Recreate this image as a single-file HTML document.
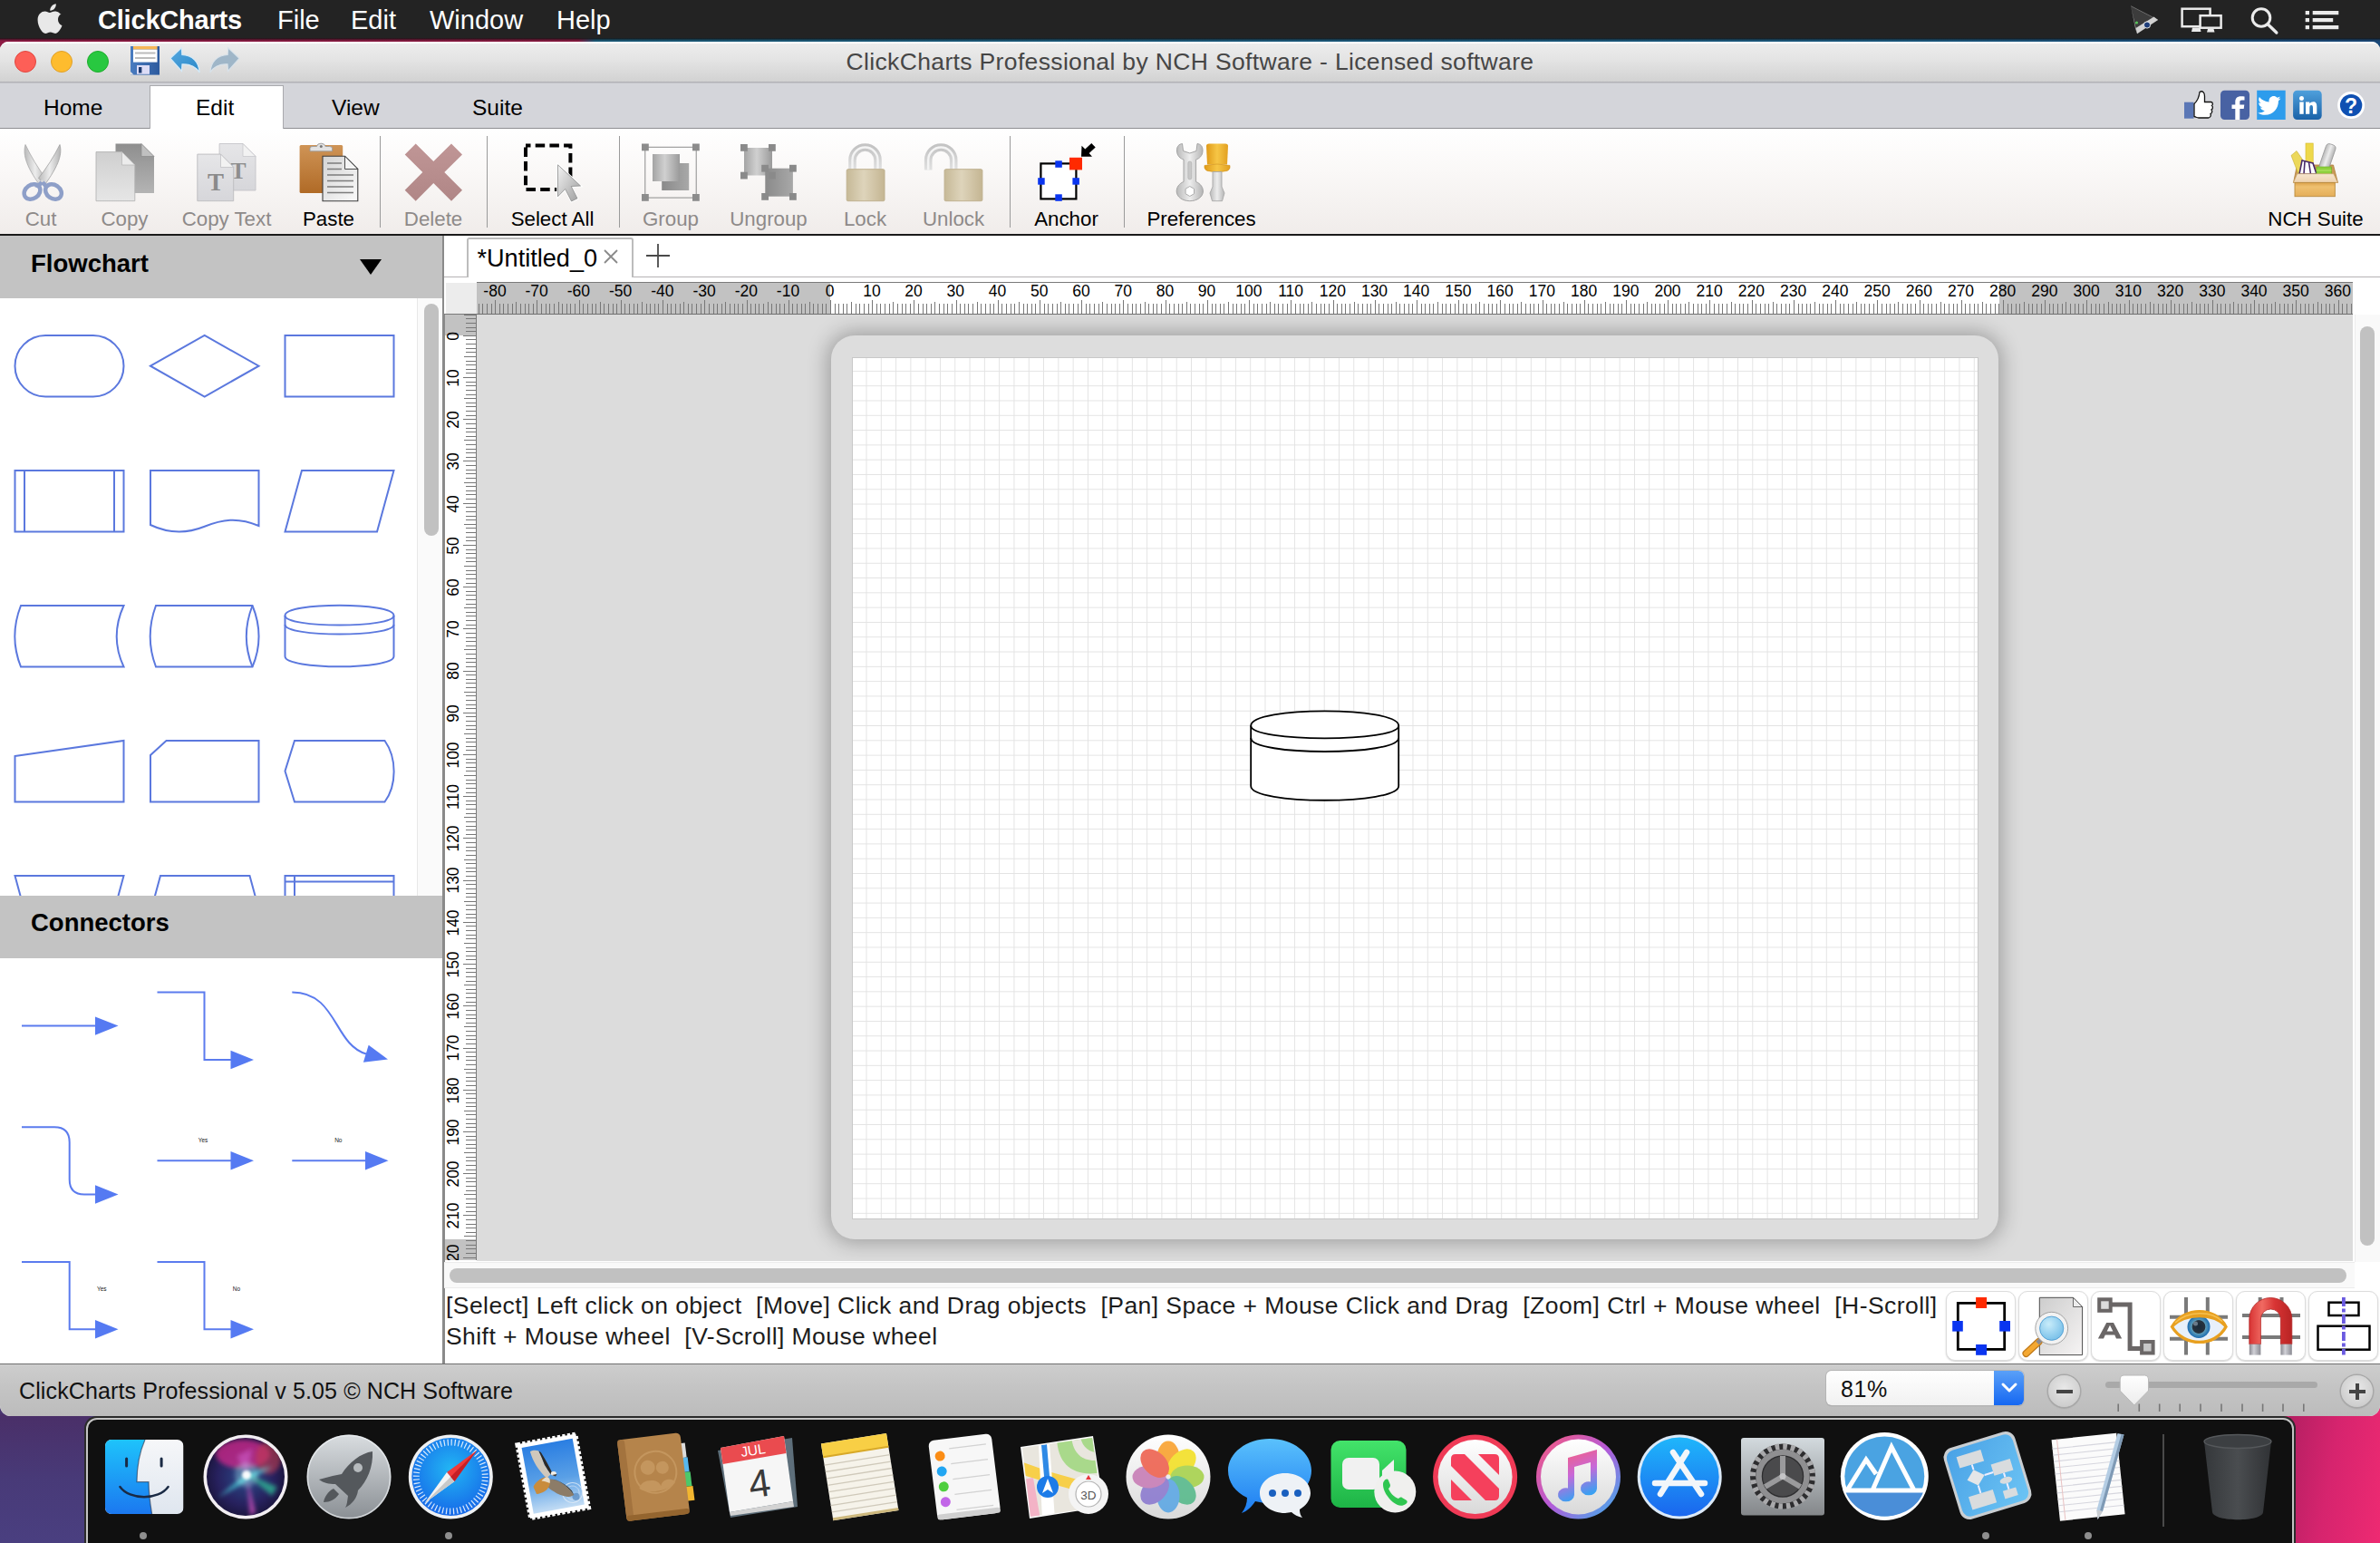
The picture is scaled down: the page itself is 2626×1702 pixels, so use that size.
<!DOCTYPE html>
<html lang="en"><head><meta charset="utf-8"><title>ClickCharts Professional by NCH Software - Licensed software</title>
<style>
*{box-sizing:border-box;margin:0;padding:0}
html,body{width:2626px;height:1702px;overflow:hidden}
body{position:relative;font-family:"Liberation Sans",sans-serif;background:#4a3a78;color:#000}
.abs{position:absolute}
.t{position:absolute;white-space:nowrap;line-height:1}
svg{position:absolute;overflow:visible}
#wall{left:0;top:0;width:2626px;height:1702px;background:linear-gradient(90deg,#48356f 0%,#4a3d7e 8%,#6a2f74 50%,#c4246c 92%,#ea2a72 100%)}
#wallL{left:0;top:1560px;width:100px;height:142px;background:linear-gradient(180deg,#4a2f68,#483a78 50%,#4a3f80)}
#wallR{left:2526px;top:1560px;width:100px;height:142px;background:linear-gradient(100deg,#b41f62 0%,#d6246e 45%,#ee2a72 100%)}
#menubar{left:0;top:0;width:2626px;height:43px;background:#232323}
#topline{left:0;top:42px;width:2626px;height:20px;background:linear-gradient(90deg,#8e1a44 0%,#86193f 24.300%,#1a5a78 25%,#1c5a80 80%,#1a4878 100%)}
.mb{color:#fff;font-size:29px;top:8px}
#win{left:0;top:46px;width:2626px;height:1516px;background:#fff;border-radius:9px 9px 12px 12px;overflow:hidden}
#titlebar{left:0;top:0;width:2626px;height:45px;background:linear-gradient(180deg,#fff 0,#fff 1.500px,#ececec 2px,#e4e4e4 45%,#d2d2d2 100%);border-bottom:1.500px solid #b2b2b6}
#title{left:0;width:2626px;text-align:center;top:9px;font-size:26.5px;color:#464646;letter-spacing:.35px}
.tl{width:24px;height:24px;border-radius:50%;top:10px}
#tabrow{left:0;top:45px;width:2626px;height:51px;background:#d4d5da;border-top:1px solid #c2c3c8;border-bottom:1px solid #8e8e92}
.tab{font-size:24.5px;top:61px;color:#000}
#tabEdit{left:165px;top:48px;width:148px;height:49px;background:#fff;border:1px solid #a9a9ad;border-bottom:none}
#ribbon{left:0;top:96px;width:2626px;height:117px;background:linear-gradient(180deg,#ffffff 0%,#faf8f7 40%,#f0ecea 100%)}
#ribline{left:0;top:212.300px;width:2626px;height:1.700px;background:#1a1a1a}
.rl{font-size:22.3px;top:185px;color:#000;transform:translateX(-50%)}
.rl.dis{color:#8e8a89}
.sep{width:1px;top:104px;height:101px;background:#9a9a9a}
</style></head><body>
<div id="wall" class="abs"></div><div id="wallL" class="abs"></div><div id="wallR" class="abs"></div>
<div id="menubar" class="abs"></div>
<div id="topline" class="abs"></div><div class="abs" style="left:0;top:42px;width:2626px;height:3px;background:linear-gradient(180deg,rgba(20,20,20,.95),rgba(20,20,20,0))"></div>
<svg id="apple" style="left:41px;top:4px" width="28" height="33" viewBox="0 0 814 1000"><path fill="#e8e8e8" d="M788 341c-6 5-108 62-108 190 0 148 130 200 134 201-1 3-21 71-69 141-43 62-88 124-156 124s-86-40-164-40c-76 0-103 41-166 41s-106-57-156-127C46 790 0 666 0 548c0-189 123-290 244-290 64 0 118 42 158 42 38 0 98-45 171-45 28 0 127 3 193 97zM561 164c30-36 52-86 52-136 0-7-1-14-2-20-49 2-108 33-143 74-28 32-54 82-54 132 0 8 1 15 2 18 3 1 8 1 13 1 44 0 100-30 132-69z"/></svg>
<div class="t mb" style="left:108px;font-weight:bold;letter-spacing:-.2px">ClickCharts</div>
<div class="t mb" style="left:306px">File</div>
<div class="t mb" style="left:387px">Edit</div>
<div class="t mb" style="left:474px">Window</div>
<div class="t mb" style="left:614px">Help</div>
<svg id="mbicons" style="left:2336px;top:0" width="290" height="45" viewBox="2336 0 290 45">
<path d="M2351.200 6.700L2381 22L2358 37.200Z" fill="#3c3c3c"/>
<path d="M2351.200 6.700L2381 22" stroke="#6a6a6a" stroke-width="1" fill="none"/>
<path d="M2381 22L2358 37.200L2356.500 31L2376.500 18.500Z" fill="#d2d2d2"/><path d="M2351.200 6.700L2358 37.200L2356 31Z" fill="#bdbdbd"/>
<circle cx="2369" cy="27.500" r="3.600" fill="#1d3d7a" stroke="#e8e8e8" stroke-width="1"/><circle cx="2357.500" cy="25" r="1.600" fill="#58c25a"/>
<rect x="2407.600" y="9.700" width="31" height="19.500" fill="none" stroke="#ebebeb" stroke-width="2.500"/><path d="M2419 30.400H2427.500L2428.500 35H2418Z" fill="#ebebeb"/>
<rect x="2427.600" y="17.200" width="23" height="13.500" fill="#232323" stroke="#ebebeb" stroke-width="2.500"/><path d="M2436 32H2442.500L2443.500 35.500H2435Z" fill="#ebebeb"/>
<circle cx="2495" cy="19.500" r="9.800" fill="none" stroke="#ebebeb" stroke-width="3"/><path d="M2502.200 26.800L2511.800 36" stroke="#ebebeb" stroke-width="3.400" stroke-linecap="round"/>
<g fill="#ebebeb"><rect x="2543.700" y="12" width="4.300" height="4.200"/><rect x="2543.700" y="20" width="4.300" height="4.200"/><rect x="2543.700" y="28" width="4.300" height="4.200"/><rect x="2551.700" y="12" width="28.600" height="4.200"/><rect x="2551.700" y="20" width="22.500" height="4.200"/><rect x="2551.700" y="28" width="28.600" height="4.200"/></g>
</svg>
<div id="win" class="abs">
<div id="titlebar" class="abs"></div>
<div class="abs tl" style="left:16px;background:#fd5f57;border:1px solid #e2463f"></div>
<div class="abs tl" style="left:56px;background:#febc2e;border:1px solid #e0a028"></div>
<div class="abs tl" style="left:96px;background:#28c840;border:1px solid #1dad2b"></div>
<div id="title" class="t">ClickCharts Professional by NCH Software - Licensed software</div>
<div id="tabrow" class="abs"></div>
<div id="tabEdit" class="abs"></div>
<div class="t tab" style="left:48px">Home</div>
<div class="t tab" style="left:216px">Edit</div>
<div class="t tab" style="left:366px">View</div>
<div class="t tab" style="left:521px">Suite</div>
<div id="ribbon" class="abs"></div>
<div id="ribline" class="abs"></div>
<div class="t rl dis" style="left:45px">Cut</div>
<div class="t rl dis" style="left:137.5px">Copy</div>
<div class="t rl dis" style="left:250px">Copy Text</div>
<div class="t rl" style="left:362.5px">Paste</div>
<div class="abs sep" style="left:419px"></div>
<div class="t rl dis" style="left:478px">Delete</div>
<div class="abs sep" style="left:537px"></div>
<div class="t rl" style="left:609.5px">Select All</div>
<div class="abs sep" style="left:683px"></div>
<div class="t rl dis" style="left:740px">Group</div>
<div class="t rl dis" style="left:848px">Ungroup</div>
<div class="t rl dis" style="left:954.5px">Lock</div>
<div class="t rl dis" style="left:1052px">Unlock</div>
<div class="abs sep" style="left:1114px"></div>
<div class="t rl" style="left:1176.5px">Anchor</div>
<div class="abs sep" style="left:1240px"></div>
<div class="t rl" style="left:1325.5px">Preferences</div>
<div class="t rl" style="left:2555px">NCH Suite</div>
<style>
#left{left:0;top:214px;width:489px;height:1244px;background:#fff}
#lborder{left:488px;top:214px;width:2px;height:1244px;background:#8a8a8a}
.lh{left:0;width:488px;height:69px;background:#c3c3c3}
.lht{font-size:27.5px;font-weight:bold;left:34px;color:#000}
#lscroll{left:460px;top:283px;width:28px;height:659px;background:#fafafa;border-left:1px solid #e8e8e8}
#lthumb{left:468px;top:289px;width:16px;height:256px;border-radius:8px;background:#c1c1c1}
.shp{fill:none;stroke:#5b78de;stroke-width:2}
.con{fill:none;stroke:#5b7bee;stroke-width:2}
.ah{fill:#557af2;stroke:none}
.ct{font-size:6.5px;fill:#222;font-family:"Liberation Sans",sans-serif}
</style>
<div id="left" class="abs"></div>
<div class="abs lh" style="top:214px"></div>
<div class="t lht" style="top:231px">Flowchart</div>
<svg style="left:397px;top:240px" width="24" height="17"><path d="M0 0H24L12 17Z" fill="#000"/></svg>
<div id="lscroll" class="abs"></div>
<div id="lthumb" class="abs"></div>
<svg id="shapes" style="left:0;top:283px" width="460" height="659" viewBox="0 283 460 659">
<!-- row 1 : y 324-391 -->
<rect class="shp" x="16.5" y="324" width="120" height="67.5" rx="33.7"/>
<path class="shp" d="M166 357.7L225.7 324L285.5 357.7L225.7 391.5Z"/>
<rect class="shp" x="314.5" y="324" width="120" height="67.5"/>
<!-- row 2 : y 473-540 -->
<rect class="shp" x="16.5" y="473" width="120" height="67.5"/>
<path class="shp" d="M27 473V540.5M126 473V540.5"/>
<path class="shp" d="M166 473H285.5V534C262 524 245 527 225 535C205 543 185 542 166 533Z"/>
<path class="shp" d="M333 473H434.5L416 540.5H314.5Z"/>
<!-- row 3 : y 622-689 -->
<path class="shp" d="M23 622H136.5C126 645 126 667 136.5 689.5H23C14 667 14 645 23 622Z"/>
<path class="shp" d="M172 622H278.5C288 645 288 667 278.5 689.5H172C163.500 667 163.500 645 172 622Z"/>
<path class="shp" d="M278.5 622C269.500 645 269.500 667 278.500 689.5"/>
<path class="shp" d="M314.5 633C314.5 618 434.5 618 434.5 633V678C434.5 693 314.5 693 314.5 678Z"/>
<path class="shp" d="M314.5 633C314.5 647 434.5 647 434.5 633M314.5 643C314.5 657 434.5 657 434.5 643"/>
<!-- row 4 : y 771-838 -->
<path class="shp" d="M16.5 788L136.5 771V838.5H16.500Z"/>
<path class="shp" d="M183.5 771H285.500V838.500H166V787Z"/>
<path class="shp" d="M325 771H424.500C438 790 438 820 424.500 838.500H325L314.500 804.500Z"/>
<!-- row 5 : y 920- -->
<path class="shp" d="M16.5 920H136.5L118 988H35Z"/>
<path class="shp" d="M177 920H275.500L294 988H158.500Z"/>
<rect class="shp" x="314.5" y="920" width="120" height="67.500"/>
<path class="shp" d="M325 920V988M314.500 926.500H434.500"/>
</svg>
<div class="abs lh" style="top:942px"></div>
<div class="t lht" style="top:958px">Connectors</div>
<svg id="conns" style="left:0;top:1011px" width="488" height="447" viewBox="0 1011 488 447">
<!-- coordinates are win-relative (abs-46) -->
<path class="con" d="M24 1085.500H108"/><path class="ah" d="M105 1075.500L130.500 1085.500L105 1095.700Z"/>
<path class="con" d="M173.500 1048.500H225.500V1123H258"/><path class="ah" d="M254.500 1112.800L280 1123L254.500 1133.200Z"/>
<path class="con" d="M322.300 1048.500C372 1048.500 368 1106 404 1116.500"/><path class="ah" d="M406.700 1106.700L428 1122.500L400.900 1125.700Z"/>
<path class="con" d="M24 1197.200H60Q76.700 1197.200 76.700 1214V1255Q76.700 1271.500 93 1271.500H108"/><path class="ah" d="M105 1261.300L130.500 1271.500L105 1281.700Z"/>
<path class="con" d="M173.500 1234.200H258"/><path class="ah" d="M254.500 1224L280 1234.200L254.500 1244.400Z"/>
<text class="ct" x="224" y="1213.700" text-anchor="middle">Yes</text>
<path class="con" d="M322.300 1234.200H406"/><path class="ah" d="M403 1224L428.500 1234.200L403 1244.400Z"/>
<text class="ct" x="373.300" y="1213.700" text-anchor="middle">No</text>
<path class="con" d="M24 1346H76.700V1420.300H108"/><path class="ah" d="M105 1410.100L130.500 1420.300L105 1430.500Z"/>
<text class="ct" x="112.300" y="1378" text-anchor="middle">Yes</text>
<path class="con" d="M173.500 1346H225.500V1420.300H258"/><path class="ah" d="M254.500 1410.100L280 1420.300L254.500 1430.500Z"/>
<text class="ct" x="261" y="1378" text-anchor="middle">No</text>
</svg>
<div id="lborder" class="abs"></div>
<style>
#doctabs{left:490px;top:214px;width:2136px;height:47px;background:#fff;border-bottom:2px solid #b6b2b4}
#doctab{left:515px;top:216px;width:184px;height:45px;background:#fff;border:2px solid #bcbcbc;border-bottom:none;border-radius:3px 3px 0 0}
#canvas{left:490px;top:260px;width:2136px;height:1086px;background:#fff}
#cbg{left:526px;top:301px;width:2070px;height:1044px;background:#dcdcdc}
#hr{left:526px;top:265px;width:2070px;height:35.500px;background:#c2c2c2;overflow:hidden;border-top:1px solid #7a7a7a;border-bottom:1px solid #707070}
#hrw{left:390px;top:0;width:1290px;height:35px;background:#fff}
#hticks{left:0;top:0;width:2070px;height:35px}
#vr{left:491px;top:301px;width:35px;height:1043px;background:#fff;overflow:hidden;border-right:1px solid #7a7a7a}
.rlab{font-size:17.5px;color:#000;position:absolute;line-height:1;white-space:nowrap}
.vlab{font-size:17.5px;color:#000;position:absolute;line-height:1;white-space:nowrap;transform-origin:0 0;transform:rotate(-90deg)}
#page{left:917px;top:324px;width:1288px;height:997px;background:#dddddd;border-radius:26px;box-shadow:0 0 22px 4px rgba(0,0,0,.28)}
#sheet{left:940px;top:348px;width:1243px;height:951px;background-color:#fff;border:1px solid #c8c8c8;
background-image:linear-gradient(90deg,#e3e3e3 1px,transparent 1px),linear-gradient(180deg,#e3e3e3 1px,transparent 1px);background-size:16.3px 16.3px;background-position:-1.800px -2.400px}
#vsb{left:2598px;top:301px;width:28px;height:1045px;background:#f9f9f9;border-left:1px solid #ececec}
#vth{left:2604px;top:314px;width:16px;height:1014px;border-radius:8px;background:#c1c1c1}
#hsb{left:490px;top:1346px;width:2108px;height:29px;background:#f9f9f9;border-top:1px solid #ececec;border-bottom:1px solid #ececec}
#hth{left:496px;top:1353px;width:2093px;height:16px;border-radius:8px;background:#c1c1c1}
#hint{left:492px;top:1378px;font-size:26.5px;letter-spacing:.44px;line-height:33.6px;color:#1c1c1c;white-space:pre;position:absolute}
</style>
<div id="doctabs" class="abs"></div><div id="doctab" class="abs"></div>
<div class="t" style="left:526.5px;top:225px;font-size:27.1px;color:#000">*Untitled_0</div>
<svg style="left:666px;top:229px" width="16" height="16"><path d="M1 1L15 15M15 1L1 15" stroke="#8a8a8a" stroke-width="1.8" fill="none"/></svg>
<svg style="left:713px;top:223px" width="26" height="26"><path d="M13 0V26M0 13H26" stroke="#4a4a4a" stroke-width="1.8" fill="none"/></svg>
<div id="canvas" class="abs"></div><div id="cbg" class="abs"></div>
<div id="page" class="abs"></div><div id="sheet" class="abs"></div>
<div id="hr" class="abs"><div id="hrw" class="abs"></div>
<svg id="hticks" width="2070" height="35"><path d="M2.2 22.7V33.5M6.8 22.7V33.5M11.4 22.7V33.5M16.1 22.7V33.5M20.7 18.9V33.5M25.3 22.7V33.5M29.9 22.7V33.5M34.5 22.7V33.5M39.2 22.7V33.5M43.8 20.8V33.5M48.4 22.7V33.5M53.0 22.7V33.5M57.7 22.7V33.5M62.3 22.7V33.5M66.9 18.9V33.5M71.5 22.7V33.5M76.1 22.7V33.5M80.8 22.7V33.5M85.4 22.7V33.5M90.0 20.8V33.5M94.6 22.7V33.5M99.2 22.7V33.5M103.9 22.7V33.5M108.5 22.7V33.5M113.1 18.9V33.5M117.7 22.7V33.5M122.4 22.7V33.5M127.0 22.7V33.5M131.6 22.7V33.5M136.2 20.8V33.5M140.8 22.7V33.5M145.5 22.7V33.5M150.1 22.7V33.5M154.7 22.7V33.5M159.3 18.9V33.5M163.9 22.7V33.5M168.6 22.7V33.5M173.2 22.7V33.5M177.8 22.7V33.5M182.4 20.8V33.5M187.1 22.7V33.5M191.7 22.7V33.5M196.3 22.7V33.5M200.9 22.7V33.5M205.5 18.9V33.5M210.2 22.7V33.5M214.8 22.7V33.5M219.4 22.7V33.5M224.0 22.7V33.5M228.6 20.8V33.5M233.3 22.7V33.5M237.9 22.7V33.5M242.5 22.7V33.5M247.1 22.7V33.5M251.8 18.9V33.5M256.4 22.7V33.5M261.0 22.7V33.5M265.6 22.7V33.5M270.2 22.7V33.5M274.9 20.8V33.5M279.5 22.7V33.5M284.1 22.7V33.5M288.7 22.7V33.5M293.3 22.7V33.5M298.0 18.9V33.5M302.6 22.7V33.5M307.2 22.7V33.5M311.8 22.7V33.5M316.5 22.7V33.5M321.1 20.8V33.5M325.7 22.7V33.5M330.3 22.7V33.5M334.9 22.7V33.5M339.6 22.7V33.5M344.2 18.9V33.5M348.8 22.7V33.5M353.4 22.7V33.5M358.0 22.7V33.5M362.7 22.7V33.5M367.3 20.8V33.5M371.9 22.7V33.5M376.5 22.7V33.5M381.2 22.7V33.5M385.8 22.7V33.5M390.4 18.9V33.5M395.0 22.7V33.5M399.6 22.7V33.5M404.3 22.7V33.5M408.9 22.7V33.5M413.5 20.8V33.5M418.1 22.7V33.5M422.8 22.7V33.5M427.4 22.7V33.5M432.0 22.7V33.5M436.6 18.9V33.5M441.2 22.7V33.5M445.9 22.7V33.5M450.5 22.7V33.5M455.1 22.7V33.5M459.7 20.8V33.5M464.3 22.7V33.5M469.0 22.7V33.5M473.6 22.7V33.5M478.2 22.7V33.5M482.8 18.9V33.5M487.5 22.7V33.5M492.1 22.7V33.5M496.7 22.7V33.5M501.3 22.7V33.5M505.9 20.8V33.5M510.6 22.7V33.5M515.2 22.7V33.5M519.8 22.7V33.5M524.4 22.7V33.5M529.0 18.9V33.5M533.7 22.7V33.5M538.3 22.7V33.5M542.9 22.7V33.5M547.5 22.7V33.5M552.2 20.8V33.5M556.8 22.7V33.5M561.4 22.7V33.5M566.0 22.7V33.5M570.6 22.7V33.5M575.3 18.9V33.5M579.9 22.7V33.5M584.5 22.7V33.5M589.1 22.7V33.5M593.7 22.7V33.5M598.4 20.8V33.5M603.0 22.7V33.5M607.6 22.7V33.5M612.2 22.7V33.5M616.9 22.7V33.5M621.5 18.9V33.5M626.1 22.7V33.5M630.7 22.7V33.5M635.3 22.7V33.5M640.0 22.7V33.5M644.6 20.8V33.5M649.2 22.7V33.5M653.8 22.7V33.5M658.4 22.7V33.5M663.1 22.7V33.5M667.7 18.9V33.5M672.3 22.7V33.5M676.9 22.7V33.5M681.6 22.7V33.5M686.2 22.7V33.5M690.8 20.8V33.5M695.4 22.7V33.5M700.0 22.7V33.5M704.7 22.7V33.5M709.3 22.7V33.5M713.9 18.9V33.5M718.5 22.7V33.5M723.1 22.7V33.5M727.8 22.7V33.5M732.4 22.7V33.5M737.0 20.8V33.5M741.6 22.7V33.5M746.3 22.7V33.5M750.9 22.7V33.5M755.5 22.7V33.5M760.1 18.9V33.5M764.7 22.7V33.5M769.4 22.7V33.5M774.0 22.7V33.5M778.6 22.7V33.5M783.2 20.8V33.5M787.8 22.7V33.5M792.5 22.7V33.5M797.1 22.7V33.5M801.7 22.7V33.5M806.3 18.9V33.5M811.0 22.7V33.5M815.6 22.7V33.5M820.2 22.7V33.5M824.8 22.7V33.5M829.4 20.8V33.5M834.1 22.7V33.5M838.7 22.7V33.5M843.3 22.7V33.5M847.9 22.7V33.5M852.5 18.9V33.5M857.2 22.7V33.5M861.8 22.7V33.5M866.4 22.7V33.5M871.0 22.7V33.5M875.7 20.8V33.5M880.3 22.7V33.5M884.9 22.7V33.5M889.5 22.7V33.5M894.1 22.7V33.5M898.8 18.9V33.5M903.4 22.7V33.5M908.0 22.7V33.5M912.6 22.7V33.5M917.3 22.7V33.5M921.9 20.8V33.5M926.5 22.7V33.5M931.1 22.7V33.5M935.7 22.7V33.5M940.4 22.7V33.5M945.0 18.9V33.5M949.6 22.7V33.5M954.2 22.7V33.5M958.8 22.7V33.5M963.5 22.7V33.5M968.1 20.8V33.5M972.7 22.7V33.5M977.3 22.7V33.5M982.0 22.7V33.5M986.6 22.7V33.5M991.2 18.9V33.5M995.8 22.7V33.5M1000.4 22.7V33.5M1005.1 22.7V33.5M1009.7 22.7V33.5M1014.3 20.8V33.5M1018.9 22.7V33.5M1023.5 22.7V33.5M1028.2 22.7V33.5M1032.8 22.7V33.5M1037.4 18.9V33.5M1042.0 22.7V33.5M1046.7 22.7V33.5M1051.3 22.7V33.5M1055.9 22.7V33.5M1060.5 20.8V33.5M1065.1 22.7V33.5M1069.8 22.7V33.5M1074.4 22.7V33.5M1079.0 22.7V33.5M1083.6 18.9V33.5M1088.2 22.7V33.5M1092.9 22.7V33.5M1097.5 22.7V33.5M1102.1 22.7V33.5M1106.7 20.8V33.5M1111.4 22.7V33.5M1116.0 22.7V33.5M1120.6 22.7V33.5M1125.2 22.7V33.5M1129.8 18.9V33.5M1134.5 22.7V33.5M1139.1 22.7V33.5M1143.7 22.7V33.5M1148.3 22.7V33.5M1152.9 20.8V33.5M1157.6 22.7V33.5M1162.2 22.7V33.5M1166.8 22.7V33.5M1171.4 22.7V33.5M1176.1 18.9V33.5M1180.7 22.7V33.5M1185.3 22.7V33.5M1189.9 22.7V33.5M1194.5 22.7V33.5M1199.2 20.8V33.5M1203.8 22.7V33.5M1208.4 22.7V33.5M1213.0 22.7V33.5M1217.6 22.7V33.5M1222.3 18.9V33.5M1226.9 22.7V33.5M1231.5 22.7V33.5M1236.1 22.7V33.5M1240.8 22.7V33.5M1245.4 20.8V33.5M1250.0 22.7V33.5M1254.6 22.7V33.5M1259.2 22.7V33.5M1263.9 22.7V33.5M1268.5 18.9V33.5M1273.1 22.7V33.5M1277.7 22.7V33.5M1282.3 22.7V33.5M1287.0 22.7V33.5M1291.6 20.8V33.5M1296.2 22.7V33.5M1300.8 22.7V33.5M1305.5 22.7V33.5M1310.1 22.7V33.5M1314.7 18.9V33.5M1319.3 22.7V33.5M1323.9 22.7V33.5M1328.6 22.7V33.5M1333.2 22.7V33.5M1337.8 20.8V33.5M1342.4 22.7V33.5M1347.1 22.7V33.5M1351.7 22.7V33.5M1356.3 22.7V33.5M1360.9 18.9V33.5M1365.5 22.7V33.5M1370.2 22.7V33.5M1374.8 22.7V33.5M1379.4 22.7V33.5M1384.0 20.8V33.5M1388.6 22.7V33.5M1393.3 22.7V33.5M1397.9 22.7V33.5M1402.5 22.7V33.5M1407.1 18.9V33.5M1411.8 22.7V33.5M1416.4 22.7V33.5M1421.0 22.7V33.5M1425.6 22.7V33.5M1430.2 20.8V33.5M1434.9 22.7V33.5M1439.5 22.7V33.5M1444.1 22.7V33.5M1448.7 22.7V33.5M1453.3 18.9V33.5M1458.0 22.7V33.5M1462.6 22.7V33.5M1467.2 22.7V33.5M1471.8 22.7V33.5M1476.5 20.8V33.5M1481.1 22.7V33.5M1485.7 22.7V33.5M1490.3 22.7V33.5M1494.9 22.7V33.5M1499.6 18.9V33.5M1504.2 22.7V33.5M1508.8 22.7V33.5M1513.4 22.7V33.5M1518.0 22.7V33.5M1522.7 20.8V33.5M1527.3 22.7V33.5M1531.9 22.7V33.5M1536.5 22.7V33.5M1541.2 22.7V33.5M1545.8 18.9V33.5M1550.4 22.7V33.5M1555.0 22.7V33.5M1559.6 22.7V33.5M1564.3 22.7V33.5M1568.9 20.8V33.5M1573.5 22.7V33.5M1578.1 22.7V33.5M1582.7 22.7V33.5M1587.4 22.7V33.5M1592.0 18.9V33.5M1596.6 22.7V33.5M1601.2 22.7V33.5M1605.9 22.7V33.5M1610.5 22.7V33.5M1615.1 20.8V33.5M1619.7 22.7V33.5M1624.3 22.7V33.5M1629.0 22.7V33.5M1633.6 22.7V33.5M1638.2 18.9V33.5M1642.8 22.7V33.5M1647.4 22.7V33.5M1652.1 22.7V33.5M1656.7 22.7V33.5M1661.3 20.8V33.5M1665.9 22.7V33.5M1670.6 22.7V33.5M1675.2 22.7V33.5M1679.8 22.7V33.5M1684.4 18.9V33.5M1689.0 22.7V33.5M1693.7 22.7V33.5M1698.3 22.7V33.5M1702.9 22.7V33.5M1707.5 20.8V33.5M1712.1 22.7V33.5M1716.8 22.7V33.5M1721.4 22.7V33.5M1726.0 22.7V33.5M1730.6 18.9V33.5M1735.3 22.7V33.5M1739.9 22.7V33.5M1744.5 22.7V33.5M1749.1 22.7V33.5M1753.7 20.8V33.5M1758.4 22.7V33.5M1763.0 22.7V33.5M1767.6 22.7V33.5M1772.2 22.7V33.5M1776.8 18.9V33.5M1781.5 22.7V33.5M1786.1 22.7V33.5M1790.7 22.7V33.5M1795.3 22.7V33.5M1800.0 20.8V33.5M1804.6 22.7V33.5M1809.2 22.7V33.5M1813.8 22.7V33.5M1818.4 22.7V33.5M1823.1 18.9V33.5M1827.7 22.7V33.5M1832.3 22.7V33.5M1836.9 22.7V33.5M1841.6 22.7V33.5M1846.2 20.8V33.5M1850.8 22.7V33.5M1855.4 22.7V33.5M1860.0 22.7V33.5M1864.7 22.7V33.5M1869.3 18.9V33.5M1873.9 22.7V33.5M1878.5 22.7V33.5M1883.1 22.7V33.5M1887.8 22.7V33.5M1892.4 20.8V33.5M1897.0 22.7V33.5M1901.6 22.7V33.5M1906.3 22.7V33.5M1910.9 22.7V33.5M1915.5 18.9V33.5M1920.1 22.7V33.5M1924.7 22.7V33.5M1929.4 22.7V33.5M1934.0 22.7V33.5M1938.6 20.8V33.5M1943.2 22.7V33.5M1947.8 22.7V33.5M1952.5 22.7V33.5M1957.1 22.7V33.5M1961.7 18.9V33.5M1966.3 22.7V33.5M1971.0 22.7V33.5M1975.6 22.7V33.5M1980.2 22.7V33.5M1984.8 20.8V33.5M1989.4 22.7V33.5M1994.1 22.7V33.5M1998.7 22.7V33.5M2003.3 22.7V33.5M2007.9 18.9V33.5M2012.5 22.7V33.5M2017.2 22.7V33.5M2021.8 22.7V33.5M2026.4 22.7V33.5M2031.0 20.8V33.5M2035.7 22.7V33.5M2040.3 22.7V33.5M2044.9 22.7V33.5M2049.5 22.7V33.5M2054.1 18.9V33.5M2058.8 22.7V33.5M2063.4 22.7V33.5M2068.0 22.7V33.5" stroke="#777" stroke-width="1" fill="none" shape-rendering="crispEdges"/></svg>
<span class="rlab" style="left:20.0px;top:1px;transform:translateX(-50%)">-80</span>
<span class="rlab" style="left:66.2px;top:1px;transform:translateX(-50%)">-70</span>
<span class="rlab" style="left:112.4px;top:1px;transform:translateX(-50%)">-60</span>
<span class="rlab" style="left:158.6px;top:1px;transform:translateX(-50%)">-50</span>
<span class="rlab" style="left:204.8px;top:1px;transform:translateX(-50%)">-40</span>
<span class="rlab" style="left:251.1px;top:1px;transform:translateX(-50%)">-30</span>
<span class="rlab" style="left:297.3px;top:1px;transform:translateX(-50%)">-20</span>
<span class="rlab" style="left:343.5px;top:1px;transform:translateX(-50%)">-10</span>
<span class="rlab" style="left:389.7px;top:1px;transform:translateX(-50%)">0</span>
<span class="rlab" style="left:435.9px;top:1px;transform:translateX(-50%)">10</span>
<span class="rlab" style="left:482.1px;top:1px;transform:translateX(-50%)">20</span>
<span class="rlab" style="left:528.3px;top:1px;transform:translateX(-50%)">30</span>
<span class="rlab" style="left:574.6px;top:1px;transform:translateX(-50%)">40</span>
<span class="rlab" style="left:620.8px;top:1px;transform:translateX(-50%)">50</span>
<span class="rlab" style="left:667.0px;top:1px;transform:translateX(-50%)">60</span>
<span class="rlab" style="left:713.2px;top:1px;transform:translateX(-50%)">70</span>
<span class="rlab" style="left:759.4px;top:1px;transform:translateX(-50%)">80</span>
<span class="rlab" style="left:805.6px;top:1px;transform:translateX(-50%)">90</span>
<span class="rlab" style="left:851.8px;top:1px;transform:translateX(-50%)">100</span>
<span class="rlab" style="left:898.1px;top:1px;transform:translateX(-50%)">110</span>
<span class="rlab" style="left:944.3px;top:1px;transform:translateX(-50%)">120</span>
<span class="rlab" style="left:990.5px;top:1px;transform:translateX(-50%)">130</span>
<span class="rlab" style="left:1036.7px;top:1px;transform:translateX(-50%)">140</span>
<span class="rlab" style="left:1082.9px;top:1px;transform:translateX(-50%)">150</span>
<span class="rlab" style="left:1129.1px;top:1px;transform:translateX(-50%)">160</span>
<span class="rlab" style="left:1175.4px;top:1px;transform:translateX(-50%)">170</span>
<span class="rlab" style="left:1221.6px;top:1px;transform:translateX(-50%)">180</span>
<span class="rlab" style="left:1267.8px;top:1px;transform:translateX(-50%)">190</span>
<span class="rlab" style="left:1314.0px;top:1px;transform:translateX(-50%)">200</span>
<span class="rlab" style="left:1360.2px;top:1px;transform:translateX(-50%)">210</span>
<span class="rlab" style="left:1406.4px;top:1px;transform:translateX(-50%)">220</span>
<span class="rlab" style="left:1452.6px;top:1px;transform:translateX(-50%)">230</span>
<span class="rlab" style="left:1498.9px;top:1px;transform:translateX(-50%)">240</span>
<span class="rlab" style="left:1545.1px;top:1px;transform:translateX(-50%)">250</span>
<span class="rlab" style="left:1591.3px;top:1px;transform:translateX(-50%)">260</span>
<span class="rlab" style="left:1637.5px;top:1px;transform:translateX(-50%)">270</span>
<span class="rlab" style="left:1683.7px;top:1px;transform:translateX(-50%)">280</span>
<span class="rlab" style="left:1729.9px;top:1px;transform:translateX(-50%)">290</span>
<span class="rlab" style="left:1776.1px;top:1px;transform:translateX(-50%)">300</span>
<span class="rlab" style="left:1822.4px;top:1px;transform:translateX(-50%)">310</span>
<span class="rlab" style="left:1868.6px;top:1px;transform:translateX(-50%)">320</span>
<span class="rlab" style="left:1914.8px;top:1px;transform:translateX(-50%)">330</span>
<span class="rlab" style="left:1961.0px;top:1px;transform:translateX(-50%)">340</span>
<span class="rlab" style="left:2007.2px;top:1px;transform:translateX(-50%)">350</span>
<span class="rlab" style="left:2053.4px;top:1px;transform:translateX(-50%)">360</span>
</div>
<div class="abs" style="left:492px;top:266px;width:34px;height:35px;background:#ececec"></div><div class="abs" style="left:490px;top:300px;width:36px;height:1px;background:#7a7a7a"></div>
<div id="vr" class="abs">
<div class="abs" style="left:0;top:0;width:35px;height:23.300px;background:#c2c2c2"></div>
<div class="abs" style="left:0;top:1020px;width:35px;height:23.300px;background:#c2c2c2"></div>
<svg style="left:0;top:0" width="35" height="1043"><path d="M21.3 0.2H35M23.0 4.8H35M23.0 9.4H35M23.0 14.1H35M23.0 18.7H35M19.5 23.3H35M23.0 27.9H35M23.0 32.5H35M23.0 37.2H35M23.0 41.8H35M21.3 46.4H35M23.0 51.0H35M23.0 55.7H35M23.0 60.3H35M23.0 64.9H35M19.5 69.5H35M23.0 74.1H35M23.0 78.8H35M23.0 83.4H35M23.0 88.0H35M21.3 92.6H35M23.0 97.2H35M23.0 101.9H35M23.0 106.5H35M23.0 111.1H35M19.5 115.7H35M23.0 120.4H35M23.0 125.0H35M23.0 129.6H35M23.0 134.2H35M21.3 138.8H35M23.0 143.5H35M23.0 148.1H35M23.0 152.7H35M23.0 157.3H35M19.5 161.9H35M23.0 166.6H35M23.0 171.2H35M23.0 175.8H35M23.0 180.4H35M21.3 185.1H35M23.0 189.7H35M23.0 194.3H35M23.0 198.9H35M23.0 203.5H35M19.5 208.2H35M23.0 212.8H35M23.0 217.4H35M23.0 222.0H35M23.0 226.6H35M21.3 231.3H35M23.0 235.9H35M23.0 240.5H35M23.0 245.1H35M23.0 249.8H35M19.5 254.4H35M23.0 259.0H35M23.0 263.6H35M23.0 268.2H35M23.0 272.9H35M21.3 277.5H35M23.0 282.1H35M23.0 286.7H35M23.0 291.3H35M23.0 296.0H35M19.5 300.6H35M23.0 305.2H35M23.0 309.8H35M23.0 314.5H35M23.0 319.1H35M21.3 323.7H35M23.0 328.3H35M23.0 332.9H35M23.0 337.6H35M23.0 342.2H35M19.5 346.8H35M23.0 351.4H35M23.0 356.0H35M23.0 360.7H35M23.0 365.3H35M21.3 369.9H35M23.0 374.5H35M23.0 379.2H35M23.0 383.8H35M23.0 388.4H35M19.5 393.0H35M23.0 397.6H35M23.0 402.3H35M23.0 406.9H35M23.0 411.5H35M21.3 416.1H35M23.0 420.7H35M23.0 425.4H35M23.0 430.0H35M23.0 434.6H35M19.5 439.2H35M23.0 443.9H35M23.0 448.5H35M23.0 453.1H35M23.0 457.7H35M21.3 462.3H35M23.0 467.0H35M23.0 471.6H35M23.0 476.2H35M23.0 480.8H35M19.5 485.5H35M23.0 490.1H35M23.0 494.7H35M23.0 499.3H35M23.0 503.9H35M21.3 508.6H35M23.0 513.2H35M23.0 517.8H35M23.0 522.4H35M23.0 527.0H35M19.5 531.7H35M23.0 536.3H35M23.0 540.9H35M23.0 545.5H35M23.0 550.2H35M21.3 554.8H35M23.0 559.4H35M23.0 564.0H35M23.0 568.6H35M23.0 573.3H35M19.5 577.9H35M23.0 582.5H35M23.0 587.1H35M23.0 591.7H35M23.0 596.4H35M21.3 601.0H35M23.0 605.6H35M23.0 610.2H35M23.0 614.9H35M23.0 619.5H35M19.5 624.1H35M23.0 628.7H35M23.0 633.3H35M23.0 638.0H35M23.0 642.6H35M21.3 647.2H35M23.0 651.8H35M23.0 656.4H35M23.0 661.1H35M23.0 665.7H35M19.5 670.3H35M23.0 674.9H35M23.0 679.6H35M23.0 684.2H35M23.0 688.8H35M21.3 693.4H35M23.0 698.0H35M23.0 702.7H35M23.0 707.3H35M23.0 711.9H35M19.5 716.5H35M23.0 721.1H35M23.0 725.8H35M23.0 730.4H35M23.0 735.0H35M21.3 739.6H35M23.0 744.3H35M23.0 748.9H35M23.0 753.5H35M23.0 758.1H35M19.5 762.7H35M23.0 767.4H35M23.0 772.0H35M23.0 776.6H35M23.0 781.2H35M21.3 785.8H35M23.0 790.5H35M23.0 795.1H35M23.0 799.7H35M23.0 804.3H35M19.5 809.0H35M23.0 813.6H35M23.0 818.2H35M23.0 822.8H35M23.0 827.4H35M21.3 832.1H35M23.0 836.7H35M23.0 841.3H35M23.0 845.9H35M23.0 850.5H35M19.5 855.2H35M23.0 859.8H35M23.0 864.4H35M23.0 869.0H35M23.0 873.7H35M21.3 878.3H35M23.0 882.9H35M23.0 887.5H35M23.0 892.1H35M23.0 896.8H35M19.5 901.4H35M23.0 906.0H35M23.0 910.6H35M23.0 915.2H35M23.0 919.9H35M21.3 924.5H35M23.0 929.1H35M23.0 933.7H35M23.0 938.4H35M23.0 943.0H35M19.5 947.6H35M23.0 952.2H35M23.0 956.8H35M23.0 961.5H35M23.0 966.1H35M21.3 970.7H35M23.0 975.3H35M23.0 980.0H35M23.0 984.6H35M23.0 989.2H35M19.5 993.8H35M23.0 998.4H35M23.0 1003.1H35M23.0 1007.7H35M23.0 1012.3H35M21.3 1016.9H35M23.0 1021.5H35M23.0 1026.2H35M23.0 1030.8H35M23.0 1035.4H35M19.5 1040.0H35" stroke="#777" stroke-width="1" fill="none" shape-rendering="crispEdges"/></svg>
<span class="vlab" style="left:1px;top:23.6px"><span style="display:inline-block;transform:translateX(-50%)">0</span></span>
<span class="vlab" style="left:1px;top:69.8px"><span style="display:inline-block;transform:translateX(-50%)">10</span></span>
<span class="vlab" style="left:1px;top:116.0px"><span style="display:inline-block;transform:translateX(-50%)">20</span></span>
<span class="vlab" style="left:1px;top:162.2px"><span style="display:inline-block;transform:translateX(-50%)">30</span></span>
<span class="vlab" style="left:1px;top:208.5px"><span style="display:inline-block;transform:translateX(-50%)">40</span></span>
<span class="vlab" style="left:1px;top:254.7px"><span style="display:inline-block;transform:translateX(-50%)">50</span></span>
<span class="vlab" style="left:1px;top:300.9px"><span style="display:inline-block;transform:translateX(-50%)">60</span></span>
<span class="vlab" style="left:1px;top:347.1px"><span style="display:inline-block;transform:translateX(-50%)">70</span></span>
<span class="vlab" style="left:1px;top:393.3px"><span style="display:inline-block;transform:translateX(-50%)">80</span></span>
<span class="vlab" style="left:1px;top:439.5px"><span style="display:inline-block;transform:translateX(-50%)">90</span></span>
<span class="vlab" style="left:1px;top:485.8px"><span style="display:inline-block;transform:translateX(-50%)">100</span></span>
<span class="vlab" style="left:1px;top:532.0px"><span style="display:inline-block;transform:translateX(-50%)">110</span></span>
<span class="vlab" style="left:1px;top:578.2px"><span style="display:inline-block;transform:translateX(-50%)">120</span></span>
<span class="vlab" style="left:1px;top:624.4px"><span style="display:inline-block;transform:translateX(-50%)">130</span></span>
<span class="vlab" style="left:1px;top:670.6px"><span style="display:inline-block;transform:translateX(-50%)">140</span></span>
<span class="vlab" style="left:1px;top:716.8px"><span style="display:inline-block;transform:translateX(-50%)">150</span></span>
<span class="vlab" style="left:1px;top:763.0px"><span style="display:inline-block;transform:translateX(-50%)">160</span></span>
<span class="vlab" style="left:1px;top:809.3px"><span style="display:inline-block;transform:translateX(-50%)">170</span></span>
<span class="vlab" style="left:1px;top:855.5px"><span style="display:inline-block;transform:translateX(-50%)">180</span></span>
<span class="vlab" style="left:1px;top:901.7px"><span style="display:inline-block;transform:translateX(-50%)">190</span></span>
<span class="vlab" style="left:1px;top:947.9px"><span style="display:inline-block;transform:translateX(-50%)">200</span></span>
<span class="vlab" style="left:1px;top:994.1px"><span style="display:inline-block;transform:translateX(-50%)">210</span></span>
<span class="vlab" style="left:1px;top:1040.3px"><span style="display:inline-block;transform:translateX(-50%)">220</span></span>
</div>
<div class="abs" style="left:490px;top:301px;width:1px;height:1157px;background:#8a8a8a"></div>
<div id="vsb" class="abs"></div><div id="vth" class="abs"></div>
<div id="hsb" class="abs"></div><div id="hth" class="abs"></div>
<svg style="left:1370px;top:730px" width="190" height="120" viewBox="1370 730 190 120">
<path d="M1380.2 754.500C1380.2 733 1543.200 733 1543.200 754.500V821C1543.200 842 1380.200 842 1380.200 821Z" fill="#fff" stroke="#000" stroke-width="1.800"/>
<path d="M1380.200 754.500C1380.200 773 1543.200 773 1543.200 754.500M1380.200 768C1380.200 788 1543.200 788 1543.200 768" fill="none" stroke="#000" stroke-width="1.800"/>
</svg>
<div id="hint">[Select] Left click on object  [Move] Click and Drag objects  [Pan] Space + Mouse Click and Drag  [Zoom] Ctrl + Mouse wheel  [H-Scroll]
Shift + Mouse wheel  [V-Scroll] Mouse wheel</div>
<style>
#status{left:0;top:1458px;width:2626px;height:58px;background:linear-gradient(180deg,#cdcdcd 0%,#c4c4c4 45%,#bcbcbc 100%);border-top:1.500px solid #6f6f6f}
#stxt{left:21px;top:1476px;font-size:25px;color:#111;letter-spacing:.12px}
.tb{top:1378px;width:77px;height:77px;background:#fff;border:1px solid #dcdcdc;border-radius:10px;box-shadow:0 1px 2px rgba(0,0,0,.18)}
#zc{left:2015px;top:1466px;width:218px;height:38px;border-radius:6px;background:linear-gradient(180deg,#fff,#f1f1f1);box-shadow:0 0 0 1px #b4b4b4,0 1px 1px rgba(0,0,0,.25);overflow:hidden}
#zcb{left:185px;top:0;width:33px;height:38px;background:linear-gradient(180deg,#5aa0f8,#1567f2)}
.rb{width:35px;height:35px;border-radius:50%;top:1471px;background:radial-gradient(circle at 50% 40%,#e8e8e8,#cfcfcf 70%,#bdbdbd);box-shadow:0 0 0 1.5px #a8a8a8,0 1px 2px rgba(0,0,0,.3)}
#strack{left:2323px;top:1478px;width:234px;height:7px;border-radius:4px;background:#a9a9a9}
</style>
<div id="status" class="abs"></div>
<div id="stxt" class="t">ClickCharts Professional v 5.05 © NCH Software</div>
<div id="zc" class="abs"><div id="zcb" class="abs"></div>
<svg style="left:192px;top:13px" width="20" height="12"><path d="M3 2L10 9L17 2" stroke="#fff" stroke-width="3" fill="none" stroke-linecap="round" stroke-linejoin="round"/></svg></div>
<div class="t" style="left:2031px;top:1474px;font-size:25px;color:#111;letter-spacing:.6px">81%</div>
<div class="abs rb" style="left:2260px"></div>
<div class="abs" style="left:2268.500px;top:1486.500px;width:18px;height:4px;background:#444"></div>
<div class="abs rb" style="left:2583px"></div>
<div class="abs" style="left:2591.500px;top:1486.500px;width:18px;height:4px;background:#444"></div>
<div class="abs" style="left:2598.500px;top:1479.500px;width:4px;height:18px;background:#444"></div>
<div id="strack" class="abs"></div>
<svg style="left:2330px;top:1468px" width="230" height="46" viewBox="2330 1468 230 46">
<path d="M2337.200 1502.500V1511M2360.300 1502.500V1511M2382.700 1502.500V1511M2405.200 1502.500V1511M2428 1502.500V1511M2451 1502.500V1511M2474 1502.500V1511M2496.600 1502.500V1511M2519 1502.500V1511M2541.800 1502.500V1511" stroke="#777" stroke-width="1.600" fill="none"/>
<defs><linearGradient id="kg" x1="0" y1="0" x2="0" y2="1"><stop offset="0" stop-color="#fff"/><stop offset="1" stop-color="#ececec"/></linearGradient></defs>
<path d="M2343 1471H2366.500Q2370.500 1471 2370.500 1475V1488L2354.800 1504L2339.200 1488V1475Q2339.200 1471 2343 1471Z" fill="url(#kg)" stroke="#b9b9b9" stroke-width="1"/>
</svg>
<div class="abs tb" style="left:2147px"></div>
<div class="abs tb" style="left:2227px"></div>
<div class="abs tb" style="left:2307px"></div>
<div class="abs tb" style="left:2387px"></div>
<div class="abs tb" style="left:2467px"></div>
<div class="abs tb" style="left:2547px"></div>
<svg id="ricons" style="left:0;top:0" width="2626" height="260" viewBox="0 46 2626 260">
<defs>
<linearGradient id="gSil" x1="0" y1="0" x2="1" y2="0"><stop offset="0" stop-color="#b9b9b9"/><stop offset=".5" stop-color="#ededed"/><stop offset="1" stop-color="#b4b4b4"/></linearGradient>
<linearGradient id="gPgL" x1="0" y1="0" x2="0" y2="1"><stop offset="0" stop-color="#cfcfcf"/><stop offset="1" stop-color="#e6e6e6"/></linearGradient>
<linearGradient id="gPgD" x1="0" y1="0" x2="0" y2="1"><stop offset="0" stop-color="#8e8e8e"/><stop offset="1" stop-color="#b4b4b4"/></linearGradient>
<linearGradient id="gPgT" x1="0" y1="0" x2="0" y2="1"><stop offset="0" stop-color="#e6e6e8"/><stop offset="1" stop-color="#d6d6da"/></linearGradient>
<linearGradient id="gClip" x1="0" y1="0" x2="0" y2="1"><stop offset="0" stop-color="#cf9456"/><stop offset="1" stop-color="#b06a26"/></linearGradient>
<linearGradient id="gPaper" x1="0" y1="0" x2="1" y2="1"><stop offset="0" stop-color="#d4d4d4"/><stop offset="1" stop-color="#fafafa"/></linearGradient>
<linearGradient id="gSq1" x1="0" y1="0" x2="1" y2="0"><stop offset="0" stop-color="#a4a4a4"/><stop offset=".45" stop-color="#d0d0d0"/><stop offset="1" stop-color="#9a9a9a"/></linearGradient>
<linearGradient id="gSq2" x1="0" y1="0" x2="1" y2="0"><stop offset="0" stop-color="#8a8a8a"/><stop offset="1" stop-color="#a8a8a8"/></linearGradient>
<linearGradient id="gLock" x1="0" y1="0" x2="1" y2="0"><stop offset="0" stop-color="#c6b997"/><stop offset=".45" stop-color="#ded4bb"/><stop offset="1" stop-color="#c4b592"/></linearGradient>
<linearGradient id="gShk" x1="0" y1="0" x2="0" y2="1"><stop offset="0" stop-color="#c4c4c4"/><stop offset="1" stop-color="#e4e4e4"/></linearGradient>
<linearGradient id="gCur" x1="0" y1="0" x2="1" y2="1"><stop offset="0" stop-color="#f4f4f4"/><stop offset="1" stop-color="#9c9c9c"/></linearGradient>
<linearGradient id="gYel" x1="0" y1="0" x2="1" y2="0"><stop offset="0" stop-color="#e09a18"/><stop offset=".5" stop-color="#f6c646"/><stop offset="1" stop-color="#e2a020"/></linearGradient>
<linearGradient id="gBox" x1="0" y1="0" x2="0" y2="1"><stop offset="0" stop-color="#dca24c"/><stop offset=".3" stop-color="#efc070"/><stop offset="1" stop-color="#e4ae5a"/></linearGradient>
<linearGradient id="gFlap" x1="0" y1="0" x2="0" y2="1"><stop offset="0" stop-color="#f6e6d0"/><stop offset="1" stop-color="#eed2ae"/></linearGradient>
<linearGradient id="gSave" x1="0" y1="0" x2="1" y2="0"><stop offset="0" stop-color="#4a7cc0"/><stop offset="1" stop-color="#2c5a9e"/></linearGradient>
<linearGradient id="gUndo" x1="0" y1="0" x2="1" y2="1"><stop offset="0" stop-color="#55a8e0"/><stop offset="1" stop-color="#2a88c8"/></linearGradient>
<linearGradient id="gLi" x1="0" y1="0" x2="0" y2="1"><stop offset="0" stop-color="#4fa0dc"/><stop offset="1" stop-color="#1a62a8"/></linearGradient>
<linearGradient id="gDel" x1="0" y1="0" x2="0" y2="1"><stop offset="0" stop-color="#c09696"/><stop offset="1" stop-color="#b08686"/></linearGradient>
</defs>
<!-- quick access: save / undo / redo -->
<rect x="144" y="51" width="32" height="31.600" fill="url(#gSave)"/><path d="M144 82.600V79L147.500 82.600Z" fill="#e4e4e4"/>
<rect x="147" y="51" width="26.500" height="3.600" fill="#f6b756"/><rect x="147" y="54.600" width="26.500" height="14" fill="#fff"/><path d="M149 58.500H171.500M149 64H171.500" stroke="#bcbcbc" stroke-width="2.200"/>
<rect x="151" y="72" width="14" height="9.800" fill="#dcdcf6"/><rect x="153" y="74" width="3.400" height="6.500" fill="#1c3a70"/>
<path d="M188 64.300L200.300 52.800L200.900 60.500C212 61 219.500 68 220.100 80C216 73 210 70.500 201 70.800L200.500 78.500Z" fill="url(#gUndo)" stroke="#d4eaf8" stroke-width="1.200"/>
<path d="M264 64.300L251.700 52.800L251.100 60.500C240 61 232.500 68 231.900 80C236 73 242 70.500 251 70.800L251.500 78.500Z" fill="#9fb6c8" stroke="#d8e2ea" stroke-width="1.200"/>
<!-- social -->
<rect x="2410" y="112.700" width="10.500" height="18" fill="#5b77b6"/>
<path d="M2421 114.500C2425 111 2426.500 106 2427 101.500C2430 99.500 2432.500 102 2432.500 106V112.500H2439.500C2441.500 112.500 2442 115.500 2440.500 116.500C2442 117.500 2441.500 120.500 2440 121C2441.500 122.500 2440.500 125 2439 125.500C2440 127.500 2438.500 130 2436.500 130H2426C2424 130 2423 129 2421 128.500Z" fill="#fff" stroke="#111" stroke-width="1.300"/>
<rect x="2450" y="99.700" width="32" height="32.300" rx="4.500" fill="#4862a3"/>
<path d="M2476.500 110.500H2473.500C2471.800 110.500 2471.300 111.300 2471.300 112.800V115.500H2476.300L2475.700 120H2471.300V132H2466.300V120H2462.500V115.500H2466.300V112.300C2466.300 108.300 2468.800 106.300 2472.300 106.300C2474 106.300 2475.500 106.400 2476.500 106.600Z" fill="#fff"/>
<rect x="2490.200" y="99.700" width="31.500" height="32.300" fill="#2d9cec"/>
<path d="M2516.500 108.500C2515.500 109 2514.600 109.200 2513.500 109.400C2514.600 108.700 2515.400 107.700 2515.800 106.500C2514.800 107.100 2513.700 107.500 2512.500 107.800C2511.500 106.700 2510.200 106.100 2508.700 106.100C2505.800 106.100 2503.500 108.400 2503.500 111.300C2503.500 111.700 2503.500 112.100 2503.600 112.500C2499.300 112.300 2495.500 110.200 2492.900 107C2492.500 107.800 2492.200 108.700 2492.200 109.600C2492.200 111.400 2493.100 113 2494.500 113.900C2493.700 113.900 2492.800 113.700 2492.100 113.300C2492.100 115.900 2493.900 118 2496.300 118.500C2495.500 118.700 2494.700 118.700 2494 118.600C2494.600 120.700 2496.600 122.200 2498.800 122.200C2496.700 123.900 2494 124.700 2491.200 124.400C2493.500 125.900 2496.200 126.700 2499.100 126.700C2508.700 126.700 2513.900 118.800 2513.900 111.900V111.200C2514.900 110.500 2515.800 109.600 2516.500 108.500Z" fill="#fff"/>
<rect x="2530.100" y="99.700" width="31.600" height="32.300" rx="4.500" fill="url(#gLi)"/>
<rect x="2537.300" y="112.500" width="4.400" height="13.300" fill="#fff"/><circle cx="2539.500" cy="108.400" r="2.500" fill="#fff"/>
<path d="M2544 112.500H2548.300V114.300C2549.200 113 2550.600 112.200 2552.300 112.200C2555.300 112.200 2556.300 114.200 2556.300 117.300V125.800H2552V119C2552 117.200 2551.600 116 2550.200 116C2548.800 116 2548.300 117.100 2548.300 119V125.800H2544Z" fill="#fff"/>
<circle cx="2594.100" cy="116.100" r="15" fill="#fff"/><circle cx="2594.100" cy="116.100" r="12.200" fill="#0f50b2"/>
<text x="2594.100" y="124.500" font-size="23" font-weight="bold" fill="#fff" text-anchor="middle" font-family="Liberation Sans,sans-serif">?</text>
<!-- Cut -->
<path d="M28 159.500C24.500 172 31 186 43 203L50.500 196.500C42 186 34 172 28 159.500Z" fill="url(#gSil)" stroke="#a8a8a8" stroke-width=".8"/>
<path d="M66 159.500C69.500 172 62 186 50 203L42.500 196.500C51 186 60 172 66 159.500Z" fill="url(#gSil)" stroke="#a0a0a0" stroke-width=".8"/>
<ellipse cx="35.500" cy="211.500" rx="9.500" ry="7.500" transform="rotate(-35 35.500 211.500)" fill="none" stroke="#8e9fc8" stroke-width="4.500"/>
<ellipse cx="59" cy="211.500" rx="9.500" ry="7.500" transform="rotate(35 59 211.500)" fill="none" stroke="#8e9fc8" stroke-width="4.500"/>
<path d="M42 202L46.500 198L51 202L55 206L50 208L46.500 204L43 208L38 206Z" fill="#8e9fc8"/><circle cx="46.500" cy="199.500" r="1.500" fill="#d8d8d8"/>
<!-- Copy -->
<path d="M127.500 158.500H156L170 172.500V213H127.500Z" fill="url(#gPgD)"/><path d="M156 158.500V172.500H170Z" fill="#c0c0c0" stroke="#8a8a8a" stroke-width=".7"/>
<path d="M106 167.600H134.500L148.800 182V221.700H106Z" fill="url(#gPgL)" stroke="#b4b4b4" stroke-width=".9"/><path d="M134.500 167.600V182H148.800Z" fill="#ececec" stroke="#b4b4b4" stroke-width=".7"/>
<!-- Copy Text -->
<path d="M242.100 158.500H268L282 172.500V210H242.100Z" fill="url(#gPgT)" stroke="#c4c4c8" stroke-width=".9"/><path d="M268 158.500V172.500H282Z" fill="#f2f2f2" stroke="#c4c4c8" stroke-width=".7"/>
<text x="263" y="197" font-size="26" font-weight="bold" fill="#8e8e8e" text-anchor="middle" font-family="Liberation Serif,serif">T</text>
<path d="M217.800 170.100H243.500L257.700 184.500V221.700H217.800Z" fill="url(#gPgT)" stroke="#bcbcc0" stroke-width=".9"/><path d="M243.500 170.100V184.500H257.700Z" fill="#f2f2f2" stroke="#bcbcc0" stroke-width=".7"/>
<text x="238" y="210" font-size="27" font-weight="bold" fill="#8a8a8a" text-anchor="middle" font-family="Liberation Serif,serif">T</text>
<!-- Paste -->
<rect x="330.600" y="160" width="47.600" height="53" rx="1.500" fill="url(#gClip)"/>
<path d="M342 166.800V163.500Q342 161.500 345 161.500H349.500Q350 158.200 354.200 158.200Q358.500 158.200 359 161.500H363.500Q366.600 161.500 366.600 163.500V166.800Z" fill="#e2e2e2" stroke="#9a9a9a" stroke-width=".9"/><circle cx="354.300" cy="161.500" r="1.500" fill="#777"/>
<path d="M356 172.200H380.500L394.800 186.500V221.700H356Z" fill="url(#gPaper)" stroke="#3c3c3c" stroke-width="1.100"/><path d="M380.500 172.200V186.500H394.800Z" fill="#f4f4f4" stroke="#3c3c3c" stroke-width=".9"/>
<path d="M361 180H377M361 186.500H377M361 193H390M361 199.500H390M361 206H390M361 212.500H390" stroke="#7c7c7c" stroke-width="1.700"/>
<!-- Delete -->
<path d="M446.700 170.500L458.700 158.500L478.300 178.100L498 158.500L510 170.500L490.300 190.100L510 209.700L498 221.700L478.300 202.100L458.700 221.700L446.700 209.700L466.300 190.100Z" fill="url(#gDel)"/>
<!-- Select All -->
<path d="M580 160.500H629.400V209H580Z" fill="none" stroke="#000" stroke-width="4" stroke-dasharray="10.500 5.200" stroke-dashoffset="5"/>
<path d="M615.500 181.800V216.800L623.700 208.500L630.500 222L637 218.800L630.200 205.500L640.500 205Z" fill="url(#gCur)" stroke="#fff" stroke-width="2.600"/>
<path d="M615.500 181.800V216.800L623.700 208.500L630.500 222L637 218.800L630.200 205.500L640.500 205Z" fill="url(#gCur)" stroke="#8c8c8c" stroke-width=".8"/>
<!-- Group -->
<rect x="711.800" y="162.300" width="56.400" height="55.800" fill="none" stroke="#8c8c8c" stroke-width="1"/>
<rect x="708" y="158.500" width="7.800" height="7.800" fill="#8c8c8c"/><rect x="764" y="158.500" width="7.800" height="7.800" fill="#8c8c8c"/><rect x="708" y="214" width="7.800" height="7.800" fill="#8c8c8c"/><rect x="764" y="214" width="7.800" height="7.800" fill="#8c8c8c"/>
<rect x="730.200" y="180" width="30" height="30" fill="url(#gSq2)"/><rect x="720" y="170" width="30" height="30" fill="url(#gSq1)"/>
<!-- Ungroup -->
<rect x="821" y="163" width="31" height="30.500" fill="url(#gSq1)"/><rect x="844.300" y="185.700" width="30.600" height="31" fill="url(#gSq2)"/>
<g fill="#8a8a8a"><rect x="817" y="159" width="7.800" height="7.800"/><rect x="848" y="159" width="7.800" height="7.800"/><rect x="817" y="189.700" width="7.800" height="7.800"/><rect x="848" y="189.700" width="7.800" height="7.800"/><rect x="840.200" y="181.800" width="7.800" height="7.800"/><rect x="871" y="181.800" width="7.800" height="7.800"/><rect x="840.200" y="213" width="7.800" height="7.800"/><rect x="871" y="213" width="7.800" height="7.800"/></g>
<!-- Lock -->
<path d="M940.500 190V176.500A14 14 0 0 1 968.500 176.500V190" fill="none" stroke="url(#gShk)" stroke-width="8.600"/><path d="M940.500 190V176.500A14 14 0 0 1 968.500 176.500V190" fill="none" stroke="#f4f4f4" stroke-width="2.400"/>
<rect x="934.200" y="186.700" width="41.800" height="35" rx="1.500" fill="url(#gLock)" stroke="#bfb18f" stroke-width="1"/>
<!-- Unlock -->
<path d="M1024.200 187.500V176.500A14 14 0 0 1 1052.200 176.500V190" fill="none" stroke="url(#gShk)" stroke-width="8.600"/><path d="M1024.200 187.500V176.500A14 14 0 0 1 1052.200 176.500V190" fill="none" stroke="#f4f4f4" stroke-width="2.400"/>
<rect x="1042.100" y="186.700" width="41.800" height="35" rx="1.500" fill="url(#gLock)" stroke="#bfb18f" stroke-width="1"/>
<!-- Anchor -->
<rect x="1148.400" y="180.400" width="39" height="39" fill="#fff" stroke="#000" stroke-width="2.200"/>
<g fill="#0a35f0"><rect x="1164.300" y="177.300" width="7.500" height="7.500"/><rect x="1145.200" y="196.200" width="7.500" height="7.500"/><rect x="1183.400" y="196.200" width="7.500" height="7.500"/><rect x="1164.300" y="214.300" width="7.500" height="7.500"/></g>
<rect x="1180" y="173.800" width="14" height="13.600" fill="#ff2a00"/>
<path d="M1193 172.800L1193.500 160.800L1197.300 164.600L1204.300 158L1208.700 162.400L1201.700 169L1205 172.800Z" fill="#000"/>
<!-- Preferences -->
<path d="M1298.500 166C1298.500 161 1301 159 1304.500 158.500L1305.500 166.500L1312.800 169L1320 166.500L1321 158.500C1324.500 159 1327 161 1327 166C1327 172 1323 175 1319.600 176V200.500C1324.500 202.500 1327.400 206.500 1327.400 211C1327.400 217 1321 221.700 1312.800 221.700C1304.500 221.700 1298.200 217 1298.200 211C1298.200 206.500 1301 202.500 1306 200.500V176C1302.500 175 1298.500 172 1298.500 166Z" fill="url(#gSil)" stroke="#a4a4a4" stroke-width="1"/>
<path d="M1312.800 205.500L1317.500 208.300V213.700L1312.800 216.500L1308.100 213.700V208.300Z" fill="#fff" stroke="#a4a4a4" stroke-width=".9"/><rect x="1310.800" y="178" width="4" height="20" rx="2" fill="#c8c8c8" stroke="#aaa" stroke-width=".6"/>
<path d="M1331 161Q1331 158.500 1334 158.500H1352Q1355 158.500 1355 161L1354 181.500H1332Z" fill="url(#gYel)"/><path d="M1329 182.500Q1343 179.500 1357 182.500Q1358 186.500 1354 188.500Q1343 191 1332 188.500Q1328 186.500 1329 182.500Z" fill="url(#gYel)" stroke="#d0901a" stroke-width=".6"/>
<path d="M1338 189.500H1348V206L1351 213L1348.500 221.700H1337.500L1335 213L1338 206Z" fill="url(#gSil)" stroke="#a8a8a8" stroke-width=".9"/>
<!-- NCH Suite -->
<path d="M2534.500 182H2574.500L2579.500 201.500H2530.500Z" fill="#c99a58" stroke="#b08040" stroke-width=".8"/>
<path d="M2528 171.500L2534 166.500L2544 181L2541 192H2536Z" fill="#ecd85a" stroke="#c8b030" stroke-width=".6"/>
<rect x="2544" y="158" width="8.200" height="30" fill="#eed84a" stroke="#d2b82a" stroke-width=".6"/>
<g transform="rotate(19 2568 172)"><rect x="2563" y="158.500" width="11" height="30" rx="4" fill="url(#gSil)" stroke="#9a9a9a" stroke-width=".8"/></g>
<path d="M2537 192L2540 177L2552 180L2556 192Z" fill="#fff" stroke="#4a2a6a" stroke-width="1.600"/><path d="M2543 178L2542 192M2547.500 179L2549.500 192" stroke="#4a2a6a" stroke-width="1.600"/>
<rect x="2556" y="184" width="16.400" height="8.500" fill="#8ed03c" stroke="#6ab020" stroke-width=".6"/><path d="M2556 188H2572.400" stroke="#b6e66a" stroke-width="1"/>
<path d="M2534.700 191.700H2574.800L2579.400 201.400H2530.400Z" fill="url(#gFlap)" stroke="#c8a46a" stroke-width=".7"/>
<rect x="2532" y="201.400" width="44.300" height="15.300" fill="url(#gBox)" stroke="#b98a3c" stroke-width=".9"/>
</svg>
<svg id="ticons" style="left:2140px;top:1369px" width="486" height="95" viewBox="2140 1415 486 95">
<defs>
<linearGradient id="gTP" x1="0" y1="0" x2="1" y2="1"><stop offset="0" stop-color="#cdcdcd"/><stop offset="1" stop-color="#f6f4f4"/></linearGradient>
<radialGradient id="gLens" cx=".4" cy=".35" r=".7"><stop offset="0" stop-color="#c8ecfa"/><stop offset="1" stop-color="#6ab8e6"/></radialGradient>
<linearGradient id="gMag" x1="0" y1="0" x2="1" y2="0"><stop offset="0" stop-color="#d83434"/><stop offset=".3" stop-color="#f06a62"/><stop offset=".6" stop-color="#d83434"/><stop offset="1" stop-color="#b82424"/></linearGradient>
<linearGradient id="gTip" x1="0" y1="0" x2="1" y2="0"><stop offset="0" stop-color="#8a8a92"/><stop offset=".4" stop-color="#d0d0d6"/><stop offset="1" stop-color="#8a8a92"/></linearGradient>
<radialGradient id="gIris" cx=".5" cy=".5" r=".5"><stop offset="0" stop-color="#1a2a3a"/><stop offset=".55" stop-color="#27323e"/><stop offset=".62" stop-color="#5a9ab8"/><stop offset="1" stop-color="#1a6ab0"/></radialGradient>
</defs>
<!-- 1 anchor -->
<rect x="2160.300" y="1437.400" width="51.400" height="51" fill="none" stroke="#000" stroke-width="2.800"/>
<rect x="2180.100" y="1431" width="12" height="12" fill="#ff2a00"/>
<g fill="#0a35f0"><rect x="2154.200" y="1457" width="11.600" height="11.600"/><rect x="2206.200" y="1457" width="11.800" height="11.600"/><rect x="2180.100" y="1483" width="12" height="11.800"/></g>
<!-- 2 zoom page -->
<path d="M2250.300 1431.300H2287.500L2297.600 1441.500V1494.600H2250.300Z" fill="url(#gTP)" stroke="#4a4a4a" stroke-width="1"/><path d="M2287.500 1431.300V1441.500H2297.600Z" fill="#ececec" stroke="#4a4a4a" stroke-width=".8"/>
<path d="M2249.500 1480L2235.500 1493" stroke="#c07a1a" stroke-width="8" stroke-linecap="round"/><path d="M2249.500 1480L2235.500 1493" stroke="#f4a832" stroke-width="5.500" stroke-linecap="round"/>
<path d="M2253 1476.500L2248 1481.500" stroke="#8a8a92" stroke-width="5"/>
<circle cx="2263.700" cy="1465.200" r="15.500" fill="url(#gLens)" stroke="#f2f2f2" stroke-width="4.600"/><circle cx="2263.700" cy="1465.200" r="17.900" fill="none" stroke="#9c9c9c" stroke-width=".9"/><circle cx="2263.700" cy="1465.200" r="13.100" fill="none" stroke="#5aa4d6" stroke-width="1"/>
<!-- 3 text connector -->
<path d="M2330 1439H2350.100V1487.500H2362" fill="none" stroke="#6a6666" stroke-width="5"/>
<rect x="2316.200" y="1433.300" width="12.500" height="12.500" fill="#dcdcdc" stroke="#6a6666" stroke-width="4"/><rect x="2363.100" y="1480" width="12.500" height="12.500" fill="#c8c8c8" stroke="#6a6666" stroke-width="4"/>
<path d="M2314.900 1476.400L2324.200 1459.100H2332L2341.200 1476.400H2335L2333.300 1472.600H2322.800L2321 1476.400ZM2324.700 1468.500H2331.400L2328 1461.700Z" fill="#6a6666"/>
<!-- 4 eye grid -->
<path d="M2412 1431V1494.600M2435.800 1431V1494.600M2394 1452.700H2458M2394 1476.800H2458" stroke="#7a7a7a" stroke-width="4" fill="none"/>
<path d="M2396.500 1463.500C2410 1441 2444 1441 2456 1463.500C2444 1486 2410 1486 2396.500 1463.500Z" fill="#e8f0fa" stroke="#e8a020" stroke-width="3.400"/>
<circle cx="2426" cy="1463.500" r="12.500" fill="url(#gIris)"/><circle cx="2422.500" cy="1460" r="2.500" fill="#9ab" opacity=".6"/>
<path d="M2396.500 1463.500C2410 1441 2444 1441 2456 1463.500C2442 1448.500 2412 1448.500 2396.500 1463.500Z" fill="#e8a020" stroke="#e8a020" stroke-width="2"/><path d="M2400 1459C2414 1445.500 2440 1445.500 2452 1457.500" fill="none" stroke="#f6c050" stroke-width="1.600"/>
<!-- 5 magnet -->
<path d="M2474 1451H2538M2474 1475H2538M2493.700 1431V1440M2517.500 1431V1440" stroke="#7a7a7a" stroke-width="4" fill="none"/>
<path d="M2481.800 1482.700V1455A23.500 23.500 0 0 1 2528.800 1455V1482.700H2516.400V1455A11 11 0 0 0 2494.400 1455V1482.700Z" fill="url(#gMag)" stroke="#b02424" stroke-width=".8"/>
<rect x="2481.800" y="1482.700" width="12.600" height="11.900" fill="url(#gTip)"/><rect x="2516.400" y="1482.700" width="12.400" height="11.900" fill="url(#gTip)"/>
<!-- 6 align -->
<rect x="2569.500" y="1436.700" width="33" height="14.300" fill="#fff" stroke="#000" stroke-width="2.500"/><rect x="2557.500" y="1462.700" width="57" height="26" fill="#fff" stroke="#000" stroke-width="2.500"/>
<path d="M2585.900 1431V1494.600" stroke="#6a5ae0" stroke-width="3.800" stroke-dasharray="10 2.500 4 2.500" fill="none"/>
</svg>
</div>
<style>
#dockw{left:93px;top:1562px;width:2439.500px;height:163px;background:#2b2b2b;border-radius:13.500px}
#dock{left:94.500px;top:1563.500px;width:2436.500px;height:160px;background:#101010;border:2px solid #c4c4c4;border-radius:12px}
#wbot{left:0;top:1562px;width:2626px;height:2px}
.dot{width:8px;height:8px;border-radius:50%;background:#8e8e8e;top:1690px}
</style>
<div id="dockw" class="abs"></div><div id="dock" class="abs"></div>
<div class="abs dot" style="left:154px"></div>
<div class="abs dot" style="left:491px"></div>
<div class="abs dot" style="left:2187px"></div>
<div class="abs dot" style="left:2300px"></div>
<div class="abs" style="left:2386px;top:1582px;width:2px;height:102px;background:#4a4a4a"></div>
<svg id="dicons" style="left:100px;top:1570px" width="2430" height="132" viewBox="100 1570 2430 132">
<defs>
<linearGradient id="fdL" x1="0" y1="0" x2="0" y2="1"><stop offset="0" stop-color="#1ec3fb"/><stop offset="1" stop-color="#1b78f0"/></linearGradient>
<linearGradient id="fdR" x1="0" y1="0" x2="0" y2="1"><stop offset="0" stop-color="#f6f7f9"/><stop offset="1" stop-color="#dfe6ef"/></linearGradient>
<radialGradient id="siri" cx=".5" cy=".5" r=".6"><stop offset="0" stop-color="#2a4b8a"/><stop offset=".6" stop-color="#27215e"/><stop offset="1" stop-color="#15102e"/></radialGradient>
<linearGradient id="lpad" x1="0" y1="0" x2="0" y2="1"><stop offset="0" stop-color="#d9dde0"/><stop offset="1" stop-color="#8a8f94"/></linearGradient>
<radialGradient id="saf" cx=".5" cy=".4" r=".6"><stop offset="0" stop-color="#22b6f4"/><stop offset="1" stop-color="#1668e8"/></radialGradient>
<linearGradient id="sky" x1="0" y1="0" x2="0" y2="1"><stop offset="0" stop-color="#2a7ee2"/><stop offset=".55" stop-color="#5aa0e6"/><stop offset="1" stop-color="#c2dcf4"/></linearGradient>
<linearGradient id="ph" x1="0" y1="0" x2="0" y2="1"><stop offset="0" stop-color="#fff"/><stop offset="1" stop-color="#d9d9d9"/></linearGradient>
<linearGradient id="msg" x1="0" y1="0" x2="0" y2="1"><stop offset="0" stop-color="#5ac1fc"/><stop offset="1" stop-color="#1e7df2"/></linearGradient>
<linearGradient id="ft" x1="0" y1="0" x2="0" y2="1"><stop offset="0" stop-color="#43e36a"/><stop offset="1" stop-color="#1db446"/></linearGradient>
<linearGradient id="mus" x1="0" y1="0" x2="1" y2="1"><stop offset="0" stop-color="#fb5a78"/><stop offset=".5" stop-color="#b45ad8"/><stop offset="1" stop-color="#35b6ee"/></linearGradient>
<linearGradient id="note" x1="0" y1="0" x2=".3" y2="1"><stop offset="0" stop-color="#fb5c74"/><stop offset=".55" stop-color="#c868d8"/><stop offset="1" stop-color="#3aa0f2"/></linearGradient>
<linearGradient id="aps" x1="0" y1="0" x2="0" y2="1"><stop offset="0" stop-color="#1fb6fb"/><stop offset="1" stop-color="#1a66ee"/></linearGradient>
<linearGradient id="sp" x1="0" y1="0" x2="0" y2="1"><stop offset="0" stop-color="#d3dade"/><stop offset="1" stop-color="#84878a"/></linearGradient>
<linearGradient id="cc" x1="0" y1="0" x2="1" y2="1"><stop offset="0" stop-color="#4aa2e6"/><stop offset="1" stop-color="#6cc4f4"/></linearGradient>
<linearGradient id="tr" x1="0" y1="0" x2="1" y2="0"><stop offset="0" stop-color="#35383b"/><stop offset=".5" stop-color="#4a4d50"/><stop offset="1" stop-color="#303235"/></linearGradient>
<filter id="blur3" x="-20%" y="-20%" width="140%" height="140%"><feGaussianBlur stdDeviation="2.600"/></filter><filter id="blur1" x="-50%" y="-50%" width="200%" height="200%"><feGaussianBlur stdDeviation="1.500"/></filter>
<clipPath id="fclip"><rect x="116" y="1588" width="86.500" height="82" rx="7"/></clipPath>
<clipPath id="siric"><circle cx="271" cy="1629" r="43"/></clipPath>
<clipPath id="mapc"><path d="M1128 1597L1205 1586L1216 1662L1137 1673Z"/></clipPath>
</defs>
<!-- Finder -->
<g clip-path="url(#fclip)"><rect x="116" y="1588" width="86.500" height="82" fill="url(#fdR)"/>
<path d="M116 1588H160C153 1604 151 1620 151 1634.700H164C164 1648 166 1660 167.600 1670H116Z" fill="url(#fdL)"/></g>
<path d="M132.400 1640C143 1655 175 1655 185.600 1640" fill="none" stroke="#1a2a44" stroke-width="2.400" stroke-linecap="round"/>
<path d="M139.600 1609V1617M178.100 1609V1617" stroke="#1a2a44" stroke-width="3" stroke-linecap="round"/>
<path d="M160 1588C153 1604 151 1620 151 1634.700H164C164 1648 166 1660 167.600 1670" fill="none" stroke="#1a2a44" stroke-width="1.200" opacity=".6"/>
<!-- Siri -->
<circle cx="271" cy="1629" r="46.500" fill="#f2eef2"/>
<circle cx="271" cy="1629" r="43" fill="url(#siri)"/>
<g clip-path="url(#siric)"><g filter="url(#blur3)">
<ellipse cx="268" cy="1604" rx="30" ry="16" fill="#d12a8c" opacity=".75"/>
<ellipse cx="296" cy="1608" rx="14" ry="18" fill="#c23a4e" opacity=".6"/>
<path d="M240 1652L272 1626L300 1618L275 1632Z" fill="#4be3e6" opacity=".8"/>
<path d="M272 1626L306 1640L300 1650Z" fill="#2fc99a" opacity=".7"/>
<path d="M272 1628L282 1668L276 1672Z" fill="#e85ad0" opacity=".7"/>
<path d="M262 1606L272 1628L278 1598Z" fill="#d866d8" opacity=".5"/>
<circle cx="272" cy="1627" r="13" fill="#bff" opacity=".3"/></g><circle cx="272" cy="1627" r="5" fill="#fff" opacity=".95" filter="url(#blur1)"/>
</g>
<!-- Launchpad -->
<circle cx="385" cy="1629" r="46.500" fill="url(#lpad)"/><circle cx="385" cy="1629" r="45.500" fill="none" stroke="#eef1f3" stroke-width="1.500" opacity=".7"/>
<path d="M411 1601C398 1603 385 1613 377 1626L367 1628L352 1632C357 1636 363 1637 370 1637L384 1650C383 1656 383 1660 381 1663C389 1659 394 1652 395 1644C405 1634 412 1618 411 1601Z" fill="#54585c"/>
<path d="M368 1642L374 1648C370 1654 364 1657 357 1657C358 1651 362 1645 368 1642Z" fill="#54585c"/>
<circle cx="395" cy="1619" r="5" fill="#b6babd"/>
<!-- Safari -->
<circle cx="497.300" cy="1629" r="46.500" fill="#eef0f2"/><circle cx="497.300" cy="1629" r="43" fill="url(#saf)"/>
<circle cx="497.300" cy="1629" r="38" fill="none" stroke="#fff" stroke-width="7" stroke-dasharray="1.200 2.780" opacity=".85"/>
<path d="M526 1600L501.500 1634L493 1624Z" fill="#f03a3a"/><path d="M468.500 1658L501.500 1634L493 1624Z" fill="#f4f4f4"/><path d="M468.500 1658L501.500 1634L497.200 1629Z" fill="#c9c9c9"/><path d="M526 1600L501.500 1634L497.200 1629Z" fill="#c51f26"/>
<!-- Mail -->
<g transform="rotate(-10.300 610.200 1628.200)"><rect x="577.700" y="1587.300" width="65" height="82" fill="none" stroke="#fff" stroke-width="5" stroke-dasharray="3.300 2.300"/><rect x="577.200" y="1586.800" width="66" height="83" fill="#fff"/><rect x="581.700" y="1591.300" width="57" height="74" fill="url(#sky)"/>
<circle cx="628" cy="1650" r="11" fill="none" stroke="#dfeaf6" stroke-width="1" opacity=".8"/><circle cx="628" cy="1650" r="7.500" fill="none" stroke="#dfeaf6" stroke-width=".8" opacity=".7"/><circle cx="631" cy="1655" r="4" fill="#5d8fc4" opacity=".8"/></g>
<path d="M603.200 1630.600C594 1622 588 1612 584.900 1601.300C588 1599.500 591.500 1599.500 594.400 1600.600C597 1606 599 1611 601 1616C603.500 1620 605.500 1623 607.600 1626.200Z" fill="#cfc8bc"/>
<path d="M594.400 1600.600C597 1606 599 1611 601 1616C603.500 1620 605.500 1623 607.600 1626.200L609.300 1624.500C606 1618 602 1610 596.800 1602Z" fill="#2e2a26"/>
<path d="M606.900 1631.500C612 1632 615 1633 617.100 1634.300C624 1638 629 1643 633.300 1648.900C630.500 1650.500 628 1651 625.900 1651.100C620 1650 615 1648 611.300 1645.300C608 1643.500 606 1642 604 1640.100Z" fill="#8c7c68"/>
<path d="M606.900 1631.500C612 1632 615 1633 617.100 1634.300C624 1638 629 1643 633.300 1648.900L631 1644.500C626 1639 620 1635 613 1632.300Z" fill="#2e2a26"/>
<path d="M603.200 1629C606.500 1630 608 1634 606 1639C604 1644 598 1647.500 592 1648C591 1645 589.500 1643 588.500 1640C590 1636 596 1630 603.200 1629Z" fill="#c98c3c"/>
<path d="M603.200 1629C606.500 1630 607.500 1633 606.500 1636C603 1634.500 600 1633.500 597.500 1633.500C599 1631.500 601 1630 603.200 1629Z" fill="#e8dcc8"/>
<ellipse cx="610.800" cy="1625.300" rx="3" ry="2.300" fill="#f4efe6"/><path d="M609 1627L614.500 1626L613 1628.500Z" fill="#3a342e"/>
<!-- Contacts -->
<g transform="rotate(-7 722 1629)"><path d="M754 1596H760V1612H754Z" fill="#dcdcdc"/><path d="M754 1612H761V1628H754Z" fill="#58b8ee"/><path d="M754 1628H762V1644H754Z" fill="#4cc86a"/><path d="M754 1644H763V1660H754Z" fill="#f2b630"/>
<rect x="686" y="1584" width="70" height="90" rx="5" fill="#b5844b"/><rect x="686" y="1584" width="8" height="90" rx="3" fill="#a3733e"/><rect x="686" y="1668" width="70" height="6" rx="3" fill="#94652f"/>
<circle cx="724" cy="1624" r="23" fill="none" stroke="#c4965e" stroke-width="2"/><circle cx="716" cy="1618" r="8" fill="#c4965e"/><circle cx="732" cy="1620" r="7" fill="#c4965e"/><path d="M704 1640C706 1630 726 1630 728 1640C730 1632 742 1632 744 1638C738 1646 712 1648 704 1640Z" fill="#c4965e"/></g>
<!-- Calendar -->
<path d="M792 1600L874 1586L880 1662L806 1674Z" fill="#5d6e7a"/>
<path d="M795 1597L865 1584L875 1656L805 1668Z" fill="#f6f6f6"/><path d="M805 1668L875 1656L876 1662L806 1672Z" fill="#d3d3d3"/>
<path d="M795 1597L865 1584L867.500 1603L797.500 1615Z" fill="#ea4b4f"/>
<text x="831" y="1605" font-size="15.500" fill="#fff" text-anchor="middle" font-family="Liberation Sans,sans-serif" transform="rotate(-9 831 1600)">JUL</text>
<text x="838" y="1651" font-size="43" fill="#3a3a3a" text-anchor="middle" font-family="Liberation Sans,sans-serif" transform="rotate(-8 838 1636)">4</text>
<!-- Notes -->
<g transform="rotate(-9 949.500 1628)"><rect x="912" y="1586" width="73" height="86" fill="#f6f3ea"/><rect x="912" y="1586" width="73" height="15" fill="#f8cf45"/><rect x="912" y="1600" width="73" height="2" fill="#d8a928"/>
<path d="M912 1610H985M912 1617.500H985M912 1625H985M912 1632.500H985M912 1640H985M912 1647.500H985M912 1655H985M912 1662.500H985" stroke="#cfc9ba" stroke-width="1.300"/><rect x="912" y="1669" width="73" height="3" fill="#cdb87c"/></g>
<!-- Reminders -->
<g transform="rotate(-7 1064 1628)"><rect x="1029" y="1585" width="70" height="88" rx="6" fill="#f7f7f7"/><rect x="1029" y="1667" width="70" height="6" rx="3" fill="#d0d0d0"/>
<circle cx="1040" cy="1603" r="5.500" fill="#fb8d16"/><circle cx="1040" cy="1620" r="5.500" fill="#22a6f2"/><circle cx="1040" cy="1637" r="5.500" fill="#4fcf3f"/><circle cx="1040" cy="1654" r="5.500" fill="#c266e8"/>
<path d="M1051 1596H1092M1051 1613H1092M1051 1630H1092M1051 1647H1092M1051 1664H1092" stroke="#d2d2d2" stroke-width="1.300"/></g>
<!-- Maps -->
<path d="M1126 1596L1206 1584L1218 1662L1136 1675Z" fill="#fafafa"/>
<g clip-path="url(#mapc)"><rect x="1120" y="1580" width="110" height="100" fill="#e9e6de"/>
<path d="M1166 1584C1166 1620 1190 1632 1224 1622V1584Z" fill="#a9d98b"/><path d="M1182 1584C1184 1608 1200 1616 1224 1608V1584Z" fill="#e9e6de"/><path d="M1192 1584C1194 1600 1208 1606 1224 1600V1584Z" fill="#a9d98b"/>
<path d="M1126 1612L1160 1624L1196 1634L1194 1646L1158 1636L1126 1626Z" fill="#f7cf49"/>
<path d="M1128 1632L1140 1630L1148 1676H1134Z" fill="#f3b3c6"/>
<path d="M1146 1594L1158 1592L1164 1676L1150 1676Z" fill="#fff"/><path d="M1149 1594L1155 1593L1159 1640L1153 1640Z" fill="#2f8ae6"/></g>
<circle cx="1156" cy="1640" r="12" fill="#1c7be8"/><path d="M1156 1631L1162 1647L1156 1643L1150 1647Z" fill="#fff"/>
<circle cx="1201" cy="1648" r="22" fill="#f4f4f4"/><circle cx="1201" cy="1648" r="14" fill="#fff" stroke="#b4b4b4" stroke-width="1.200"/><path d="M1201 1627L1204 1632H1198Z" fill="#e8383d"/>
<text x="1201" y="1653.500" font-size="13.500" fill="#555" text-anchor="middle" font-family="Liberation Sans,sans-serif">3D</text>
<!-- Photos -->
<circle cx="1289" cy="1629" r="46.500" fill="url(#ph)"/>
<g opacity=".88"><ellipse cx="1289" cy="1608" rx="12.500" ry="18.500" fill="#f9a02a"/><ellipse cx="1289" cy="1608" rx="12.500" ry="18.500" fill="#f3e022" transform="rotate(45 1289 1629)"/><ellipse cx="1289" cy="1608" rx="12.500" ry="18.500" fill="#a6d24a" transform="rotate(90 1289 1629)"/><ellipse cx="1289" cy="1608" rx="12.500" ry="18.500" fill="#55b98a" transform="rotate(135 1289 1629)"/><ellipse cx="1289" cy="1608" rx="12.500" ry="18.500" fill="#5aa6e4" transform="rotate(180 1289 1629)"/><ellipse cx="1289" cy="1608" rx="12.500" ry="18.500" fill="#8a78cf" transform="rotate(225 1289 1629)"/><ellipse cx="1289" cy="1608" rx="12.500" ry="18.500" fill="#c77bb5" transform="rotate(270 1289 1629)"/><ellipse cx="1289" cy="1608" rx="12.500" ry="18.500" fill="#ee5f4c" transform="rotate(315 1289 1629)"/></g>
<!-- Messages -->
<path d="M1401 1587C1427 1587 1447 1603 1447 1622C1447 1642 1427 1658 1401 1658C1395 1658 1390 1657 1385 1656C1381 1662 1376 1667 1370 1669C1374 1664 1376 1658 1376 1652C1363 1646 1355 1635 1355 1622C1355 1603 1375 1587 1401 1587Z" fill="url(#msg)"/>
<path d="M1418 1625C1434 1625 1446 1635 1446 1647C1446 1654 1441 1661 1434 1665C1434 1669 1435 1672 1437 1674C1432 1673 1428 1671 1425 1668C1423 1668 1420 1669 1418 1669C1402 1669 1390 1659 1390 1647C1390 1635 1402 1625 1418 1625Z" fill="#eef2f6"/>
<circle cx="1404" cy="1647" r="4" fill="#1a60bf"/><circle cx="1418" cy="1647" r="4" fill="#1a60bf"/><circle cx="1432" cy="1647" r="4" fill="#1a60bf"/>
<!-- FaceTime -->
<rect x="1468.500" y="1589" width="83" height="74" rx="10" fill="url(#ft)"/>
<rect x="1481" y="1608" width="41" height="35" rx="7" fill="#f1f1f1"/><path d="M1525 1622L1538 1610V1641L1525 1630Z" fill="#f1f1f1"/>
<circle cx="1539.300" cy="1645.600" r="23" fill="#f0f0ee"/>
<path d="M1527 1634C1529 1631 1531 1631 1532 1633L1534 1638C1534 1640 1533 1641 1532 1642C1534 1647 1538 1651 1543 1653C1544 1652 1546 1651 1547 1652L1552 1655C1553 1656 1553 1658 1551 1659C1547 1662 1542 1661 1537 1657C1531 1652 1526 1644 1526 1638C1526 1636 1526 1635 1527 1634Z" fill="#2fc650"/>
<!-- News -->
<circle cx="1627.600" cy="1629" r="46.500" fill="#ef3a56"/><circle cx="1627.600" cy="1629" r="41" fill="url(#ph)"/>
<path d="M1601 1609Q1601 1604 1606 1604H1616L1654 1642V1650Q1654 1655 1649 1655H1639L1601 1617Z" fill="#f5405c"/><path d="M1631 1604H1649Q1654 1604 1654 1609V1627Z" fill="#f5405c"/><path d="M1601 1632L1624 1655H1606Q1601 1655 1601 1650Z" fill="#f5405c"/>
<!-- Music -->
<circle cx="1741.500" cy="1629" r="46.500" fill="url(#mus)"/><circle cx="1741.500" cy="1629" r="41.500" fill="url(#ph)"/>
<path d="M1730 1608L1762 1599V1642A9 7.500 0 1 1 1755 1634.500V1613L1737 1618V1649A9 7.500 0 1 1 1730 1641.500Z" fill="url(#note)"/>
<!-- App Store -->
<circle cx="1853.200" cy="1629" r="46.500" fill="#dbe9f7"/><circle cx="1853.200" cy="1629" r="43.500" fill="url(#aps)"/>
<path d="M1846 1602L1877 1648M1861 1602L1832 1648M1826 1636H1881" stroke="#f2f6fa" stroke-width="6.500" stroke-linecap="round" fill="none"/>
<!-- System Preferences -->
<rect x="1921" y="1586" width="92" height="85.500" rx="3" fill="url(#sp)"/>
<circle cx="1967" cy="1628.500" r="36" fill="#2d2d2f"/><circle cx="1967" cy="1628.500" r="33" fill="none" stroke="#a9a9ab" stroke-width="6.500" stroke-dasharray="4.600 4.040"/><circle cx="1967" cy="1628.500" r="26.500" fill="none" stroke="#8f8f91" stroke-width="6.500"/>
<circle cx="1967" cy="1628.500" r="22" fill="#4a4a4c"/><path d="M1967 1628.500V1606M1967 1628.500L1986.500 1640M1967 1628.500L1947.500 1640" stroke="#9a9a9c" stroke-width="6" fill="none"/><circle cx="1967" cy="1628.500" r="3.500" fill="#c4c4c6"/>
<!-- Mountain app -->
<circle cx="2079.300" cy="1628.500" r="48.500" fill="#fff"/><circle cx="2079.300" cy="1628.500" r="44" fill="#4aa3e2"/>
<path d="M2036.500 1646H2122C2116 1662 2099 1672.500 2079.300 1672.500C2059.500 1672.500 2043 1662 2036.500 1646Z" fill="#4a8ed8"/>
<path d="M2038 1644L2059 1610L2070 1626M2066 1644L2087 1596L2112 1644M2036 1644H2122.500" fill="none" stroke="#fff" stroke-width="5" stroke-linejoin="miter"/>
<!-- ClickCharts -->
<g transform="rotate(-17 2193 1627.500)"><rect x="2152" y="1586.500" width="82" height="82" rx="11" fill="#c9ced2"/><rect x="2155" y="1589.500" width="76" height="76" rx="9" fill="url(#cc)"/>
<rect x="2166" y="1598" width="28" height="13" fill="#d9dcde"/><rect x="2200" y="1617" width="22" height="13" fill="#d9dcde"/><path d="M2180 1617L2190 1626L2180 1635L2170 1626Z" fill="#e4e6e8"/><rect x="2166" y="1644" width="28" height="15" fill="#d9dcde"/><ellipse cx="2211" cy="1638.500" rx="7" ry="3.500" fill="#d9dcde"/><rect x="2204" y="1649" width="15" height="9" fill="#d9dcde"/>
<path d="M2180 1611V1617M2180 1635V1644M2190 1626H2200M2211 1630V1635M2211 1642V1649" stroke="#eef" stroke-width="2" fill="none"/></g>
<!-- TextEdit -->
<g transform="rotate(-6 2306 1628.500)"><rect x="2268" y="1584" width="72" height="90" fill="#fbfbfb"/><path d="M2268 1594H2340M2268 1601H2340M2268 1608H2340M2268 1615H2340M2268 1622H2340M2268 1629H2340M2268 1636H2340M2268 1643H2340M2268 1650H2340M2268 1657H2340M2268 1664H2340" stroke="#d6d6de" stroke-width="1.100"/><path d="M2274 1584V1674" stroke="#e9c2c2" stroke-width="1"/></g>
<path d="M2336.500 1581L2343.500 1582.500L2320 1667L2314.500 1676L2313.500 1665.500Z" fill="#b4cde4"/><path d="M2340.500 1582L2343.500 1582.500L2320 1667L2317 1666.300Z" fill="#7f9ab5"/><path d="M2313.500 1665.500L2320 1667L2314.500 1676Z" fill="#c9ccd0"/>
<!-- Trash -->
<path d="M2432 1590C2432 1580 2506 1580 2506 1590L2497 1668C2496 1679 2443 1679 2441 1668Z" fill="url(#tr)"/><ellipse cx="2469" cy="1590" rx="37" ry="7.500" fill="#3c3f42" stroke="#55585b" stroke-width="1.500"/>
</svg>
</body></html>
